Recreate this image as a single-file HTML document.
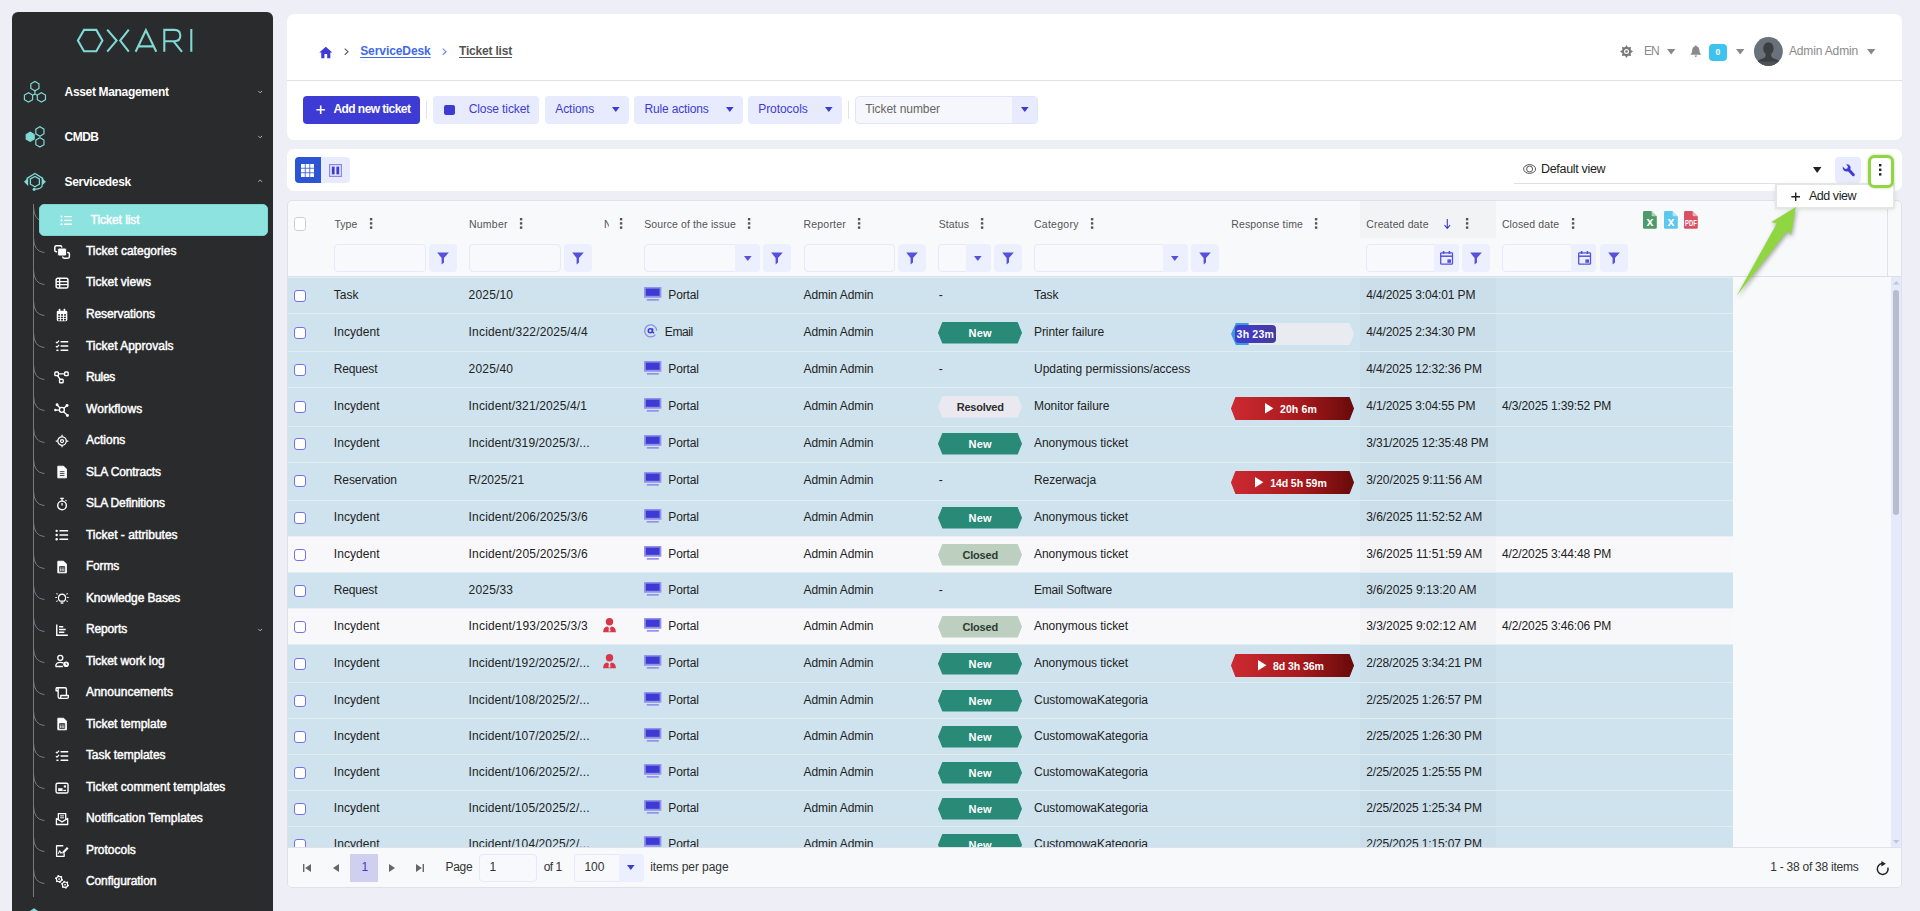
<!DOCTYPE html>
<html><head><meta charset="utf-8"><title>Ticket list</title><style>
*{box-sizing:border-box;margin:0;padding:0}
html,body{width:1920px;height:911px;overflow:hidden}
body{background:#eeeef7;font-family:"Liberation Sans",sans-serif;position:relative}
div,span,svg{position:absolute}
span{white-space:pre;line-height:16px;display:block}
svg{overflow:visible}
</style></head><body>
<div style="left:12.00px;top:12.00px;width:261.00px;height:905.00px;background:#2a2b2d;border-radius:6px 6px 0 0;"></div>
<svg style="left:0.00px;top:0.00px;" width="300.00" height="80.00" viewBox="0 0 300 80"><g fill="none" stroke="#7fd9d4" stroke-width="2.1" stroke-linejoin="miter"><path d="M77.9 40.6 L84 29.9 L96.3 29.9 L102.4 40.6 L96.3 51.3 L84 51.3 Z"/><path d="M107.2 29.6 L116.6 40.6 L107.2 51.6"/><path d="M128.8 29.6 L120.2 40.6 L128.8 51.6"/><path d="M135.6 51.8 L145.9 30.2 L156.3 51.8 M138.6 46.4 L153.4 46.4"/><path d="M164.3 51.8 L164.3 29.9 L174.5 29.9 Q180.3 29.9 180.3 35.5 Q180.3 41.2 174.5 41.2 L164.3 41.2 M173.6 41.4 L182 51.8"/><path d="M191.3 29 L191.3 51.8"/></g></svg>
<svg style="left:0.00px;top:0.00px;" width="60.00" height="120.00" viewBox="0 0 60 120"><g fill="none" stroke="#7fd9d4" stroke-width="1.2"><polygon points="38.97,88.45 34.90,90.80 30.83,88.45 30.83,83.75 34.90,81.40 38.97,83.75"/><polygon points="32.57,99.75 28.50,102.10 24.43,99.75 24.43,95.05 28.50,92.70 32.57,95.05"/><polygon points="45.47,99.75 41.40,102.10 37.33,99.75 37.33,95.05 41.40,92.70 45.47,95.05"/><path d="M34.9 90.8 L34.9 94 M34.9 94 L32.6 95.2 M34.9 94 L37.3 95.2"/></g></svg>
<svg style="left:0.00px;top:0.00px;" width="60.00" height="160.00" viewBox="0 0 60 160"><g fill="none" stroke="#7fd9d4" stroke-width="1.2"><polygon points="34.18,139.10 30.20,141.40 26.22,139.10 26.22,134.50 30.20,132.20 34.18,134.50" fill="#7fd9d4"/><polygon points="43.97,133.85 39.90,136.20 35.83,133.85 35.83,129.15 39.90,126.80 43.97,129.15"/><polygon points="43.97,144.75 39.90,147.10 35.83,144.75 35.83,140.05 39.90,137.70 43.97,140.05"/></g></svg>
<svg style="left:0.00px;top:0.00px;" width="60.00" height="200.00" viewBox="0 0 60 200"><g fill="none" stroke="#7fd9d4" stroke-width="1.3"><polygon points="39.40,184.20 34.90,186.80 30.40,184.20 30.40,179.00 34.90,176.40 39.40,179.00"/><path d="M26.6 178.6 L34.9 173.4 L43.2 178.6"/><path d="M28.2 177.6 L28.2 186 L24 181.8 Z" fill="#7fd9d4" stroke="none"/><path d="M41.6 177.6 L41.6 186 L45.9 181.8 Z" fill="#7fd9d4" stroke="none"/><path d="M42.4 185.4 Q41.5 189 35.5 189.2"/><circle cx="34.2" cy="189.3" r="1.6" fill="#7fd9d4" stroke="none"/></g></svg>
<span style="left:64.60px;top:83.64px;font-size:12px;letter-spacing:-0.335px;font-weight:700;color:#fff;">Asset Management</span>
<span style="left:64.60px;top:128.64px;font-size:12px;letter-spacing:-0.549px;font-weight:700;color:#fff;">CMDB</span>
<span style="left:64.60px;top:173.64px;font-size:12px;letter-spacing:-0.350px;font-weight:700;color:#fff;">Servicedesk</span>
<svg style="left:257.90px;top:89.80px;" width="4.40" height="4.00" viewBox="0 0 4.4 4"><path d="M0.3 0.9 L2.2 2.9 L4.1 0.9" fill="none" stroke="#aeb0b3" stroke-width="1"/></svg>
<svg style="left:257.90px;top:134.80px;" width="4.40" height="4.00" viewBox="0 0 4.4 4"><path d="M0.3 0.9 L2.2 2.9 L4.1 0.9" fill="none" stroke="#aeb0b3" stroke-width="1"/></svg>
<svg style="left:257.90px;top:179.20px;" width="4.40" height="4.00" viewBox="0 0 4.4 4"><path d="M0.3 2.9 L2.2 0.9 L4.1 2.9" fill="none" stroke="#aeb0b3" stroke-width="1"/></svg>
<div style="left:33.00px;top:204.00px;width:1.00px;height:693.00px;background:#77797c;"></div>
<svg style="left:33.00px;top:206.90px;" width="12.00" height="16.00" viewBox="0 0 12 16"><path d="M0.5 0 Q0.8 13.8 11.5 14.6" fill="none" stroke="#77797c" stroke-width="1"/></svg>
<div style="left:39.00px;top:204.00px;width:229.00px;height:32.00px;background:#8ce3e0;border:1.5px solid #7fd4d1;border-radius:5px;"></div>
<svg style="left:60.20px;top:214.30px;" width="12.80" height="12.80" viewBox="0 0 16 16"><circle cx="1.9" cy="3.2" r="1.35" fill="#fff"/><rect x="5" y="2.35" width="10" height="1.7" rx=".6" fill="#fff"/><circle cx="1.9" cy="8" r="1.35" fill="#fff"/><rect x="5" y="7.15" width="10" height="1.7" rx=".6" fill="#fff"/><circle cx="1.9" cy="12.8" r="1.35" fill="#fff"/><rect x="5" y="11.950000000000001" width="10" height="1.7" rx=".6" fill="#fff"/></svg>
<span style="left:90.60px;top:211.54px;font-size:12px;letter-spacing:-0.051px;color:#fff;-webkit-text-stroke:0.45px #fff;">Ticket list</span>
<svg style="left:33.00px;top:238.42px;" width="12.00" height="16.00" viewBox="0 0 12 16"><path d="M0.5 0 Q0.8 13.8 11.5 14.6" fill="none" stroke="#77797c" stroke-width="1"/></svg>
<svg style="left:53.70px;top:243.72px;" width="16.00" height="16.00" viewBox="0 0 16 16"><rect x="0.8" y="1.8" width="7" height="6" rx="1.6" fill="none" stroke="#fff" stroke-width="1.5"/><rect x="8.6" y="8.4" width="6.8" height="5.8" rx="1.6" fill="none" stroke="#fff" stroke-width="1.5"/><rect x="3.6" y="4" width="9" height="8" rx="1.6" fill="#fff" stroke="#2a2b2d" stroke-width="1"/></svg>
<span style="left:85.90px;top:242.96px;font-size:12px;letter-spacing:0.015px;color:#fff;-webkit-text-stroke:0.45px #fff;">Ticket categories</span>
<svg style="left:33.00px;top:269.94px;" width="12.00" height="16.00" viewBox="0 0 12 16"><path d="M0.5 0 Q0.8 13.8 11.5 14.6" fill="none" stroke="#77797c" stroke-width="1"/></svg>
<svg style="left:54.66px;top:276.20px;" width="14.08" height="14.08" viewBox="0 0 16 16"><rect x="1.3" y="2.6" width="13.4" height="11" rx="1.8" fill="none" stroke="#fff" stroke-width="1.7"/><path d="M1.5 6.4H14.5M1.5 9.9H14.5M5.3 3V13.4" stroke="#fff" stroke-width="1.5"/></svg>
<span style="left:85.90px;top:274.48px;font-size:12px;letter-spacing:0.009px;color:#fff;-webkit-text-stroke:0.45px #fff;">Ticket views</span>
<svg style="left:33.00px;top:301.46px;" width="12.00" height="16.00" viewBox="0 0 12 16"><path d="M0.5 0 Q0.8 13.8 11.5 14.6" fill="none" stroke="#77797c" stroke-width="1"/></svg>
<svg style="left:54.66px;top:307.72px;" width="14.08" height="14.08" viewBox="0 0 16 16"><rect x="2" y="3" width="12" height="12" rx="1.6" fill="#fff"/><rect x="4.4" y="0.8" width="1.7" height="3.4" rx=".6" fill="#fff"/><rect x="9.9" y="0.8" width="1.7" height="3.4" rx=".6" fill="#fff"/><rect x="3.6" y="7" width="2.2" height="1.7" fill="#2a2b2d"/><rect x="6.9" y="7" width="2.2" height="1.7" fill="#2a2b2d"/><rect x="10.2" y="7" width="2.2" height="1.7" fill="#2a2b2d"/><rect x="3.6" y="9.9" width="2.2" height="1.7" fill="#2a2b2d"/><rect x="6.9" y="9.9" width="2.2" height="1.7" fill="#2a2b2d"/><rect x="10.2" y="9.9" width="2.2" height="1.7" fill="#2a2b2d"/><rect x="3.6" y="12.5" width="2.2" height="1.7" fill="#2a2b2d"/><rect x="6.9" y="12.5" width="2.2" height="1.7" fill="#2a2b2d"/><rect x="10.2" y="12.5" width="2.2" height="1.7" fill="#2a2b2d"/></svg>
<span style="left:85.90px;top:306.00px;font-size:12px;letter-spacing:-0.086px;color:#fff;-webkit-text-stroke:0.45px #fff;">Reservations</span>
<svg style="left:33.00px;top:332.98px;" width="12.00" height="16.00" viewBox="0 0 12 16"><path d="M0.5 0 Q0.8 13.8 11.5 14.6" fill="none" stroke="#77797c" stroke-width="1"/></svg>
<svg style="left:54.66px;top:339.24px;" width="14.08" height="14.08" viewBox="0 0 16 16"><rect x="6.2" y="2.35" width="9" height="1.7" rx=".5" fill="#fff"/><rect x="6.2" y="7.15" width="9" height="1.7" rx=".5" fill="#fff"/><rect x="6.2" y="11.950000000000001" width="9" height="1.7" rx=".5" fill="#fff"/><path d="M1 3.2 L2.3 4.5 L4.7 1.8 M1 8 L2.3 9.3 L4.7 6.6" fill="none" stroke="#fff" stroke-width="1.3"/><rect x="1.6" y="12" width="2.4" height="1.7" fill="#fff"/></svg>
<span style="left:85.90px;top:337.52px;font-size:12px;letter-spacing:0.007px;color:#fff;-webkit-text-stroke:0.45px #fff;">Ticket Approvals</span>
<svg style="left:33.00px;top:364.50px;" width="12.00" height="16.00" viewBox="0 0 12 16"><path d="M0.5 0 Q0.8 13.8 11.5 14.6" fill="none" stroke="#77797c" stroke-width="1"/></svg>
<svg style="left:54.18px;top:370.28px;" width="15.04" height="15.04" viewBox="0 0 16 16"><g fill="none" stroke="#fff" stroke-width="1.5"><rect x="0.9" y="2.2" width="3.8" height="3.8" rx=".9"/><rect x="11.3" y="2.2" width="3.8" height="3.8" rx=".9"/><rect x="5.9" y="9.8" width="3.8" height="3.8" rx=".9"/><path d="M4.7 4.1H11.3M3.8 6L6.4 9.8"/></g></svg>
<span style="left:85.90px;top:369.04px;font-size:12px;letter-spacing:-0.336px;color:#fff;-webkit-text-stroke:0.45px #fff;">Rules</span>
<svg style="left:33.00px;top:396.02px;" width="12.00" height="16.00" viewBox="0 0 12 16"><path d="M0.5 0 Q0.8 13.8 11.5 14.6" fill="none" stroke="#77797c" stroke-width="1"/></svg>
<svg style="left:54.02px;top:401.64px;" width="15.36" height="15.36" viewBox="0 0 16 16"><g fill="none" stroke="#fff" stroke-width="1.4"><circle cx="8.2" cy="8.2" r="2.6"/><path d="M6.4 6.4L3.6 3.4M10.2 6.6L13 4.2M10 10.2L13.4 13.4M5.6 8.4H2"/></g><circle cx="3.2" cy="2.8" r="1.5" fill="#fff"/><circle cx="13.6" cy="3.6" r="1.5" fill="#fff"/><circle cx="14" cy="14" r="1.5" fill="#fff"/><circle cx="1.4" cy="8.4" r="1.3" fill="#fff"/></svg>
<span style="left:85.90px;top:400.56px;font-size:12px;letter-spacing:0.154px;color:#fff;-webkit-text-stroke:0.45px #fff;">Workflows</span>
<svg style="left:33.00px;top:427.54px;" width="12.00" height="16.00" viewBox="0 0 12 16"><path d="M0.5 0 Q0.8 13.8 11.5 14.6" fill="none" stroke="#77797c" stroke-width="1"/></svg>
<svg style="left:54.66px;top:433.80px;" width="14.08" height="14.08" viewBox="0 0 16 16"><g fill="none" stroke="#fff" stroke-width="1.4"><circle cx="8" cy="8" r="4.8"/><circle cx="8" cy="8" r="1.7"/><path d="M8 0.8V3.2M8 12.8V15.2M0.8 8H3.2M12.8 8H15.2"/></g></svg>
<span style="left:85.90px;top:432.08px;font-size:12px;letter-spacing:0.021px;color:#fff;-webkit-text-stroke:0.45px #fff;">Actions</span>
<svg style="left:33.00px;top:459.06px;" width="12.00" height="16.00" viewBox="0 0 12 16"><path d="M0.5 0 Q0.8 13.8 11.5 14.6" fill="none" stroke="#77797c" stroke-width="1"/></svg>
<svg style="left:54.66px;top:465.32px;" width="14.08" height="14.08" viewBox="0 0 16 16"><path d="M3.2 1.4H9.8L13 4.6V14.6H3.2Z" fill="#fff" stroke="#fff" stroke-width="1" stroke-linejoin="round"/><path d="M5.4 7.6H10.8M5.4 9.8H10.8M5.4 12H10.8" stroke="#2a2b2d" stroke-width="1"/></svg>
<span style="left:85.90px;top:463.60px;font-size:12px;letter-spacing:-0.131px;color:#fff;-webkit-text-stroke:0.45px #fff;">SLA Contracts</span>
<svg style="left:33.00px;top:490.58px;" width="12.00" height="16.00" viewBox="0 0 12 16"><path d="M0.5 0 Q0.8 13.8 11.5 14.6" fill="none" stroke="#77797c" stroke-width="1"/></svg>
<svg style="left:54.66px;top:496.84px;" width="14.08" height="14.08" viewBox="0 0 16 16"><g fill="none" stroke="#fff" stroke-width="1.6"><circle cx="8" cy="9.6" r="4.9"/><path d="M6 1.6H10M8 1.8V4.6M8 9.8V6.8M12 4.6L13 3.6" stroke-width="1.5"/></g></svg>
<span style="left:85.90px;top:495.12px;font-size:12px;letter-spacing:-0.159px;color:#fff;-webkit-text-stroke:0.45px #fff;">SLA Definitions</span>
<svg style="left:33.00px;top:522.10px;" width="12.00" height="16.00" viewBox="0 0 12 16"><path d="M0.5 0 Q0.8 13.8 11.5 14.6" fill="none" stroke="#77797c" stroke-width="1"/></svg>
<svg style="left:54.66px;top:528.36px;" width="14.08" height="14.08" viewBox="0 0 16 16"><circle cx="1.9" cy="3.2" r="1.35" fill="#fff"/><rect x="5" y="2.35" width="10" height="1.7" rx=".6" fill="#fff"/><circle cx="1.9" cy="8" r="1.35" fill="#fff"/><rect x="5" y="7.15" width="10" height="1.7" rx=".6" fill="#fff"/><circle cx="1.9" cy="12.8" r="1.35" fill="#fff"/><rect x="5" y="11.950000000000001" width="10" height="1.7" rx=".6" fill="#fff"/></svg>
<span style="left:85.90px;top:526.64px;font-size:12px;letter-spacing:0.006px;color:#fff;-webkit-text-stroke:0.45px #fff;">Ticket - attributes</span>
<svg style="left:33.00px;top:553.62px;" width="12.00" height="16.00" viewBox="0 0 12 16"><path d="M0.5 0 Q0.8 13.8 11.5 14.6" fill="none" stroke="#77797c" stroke-width="1"/></svg>
<svg style="left:54.66px;top:559.88px;" width="14.08" height="14.08" viewBox="0 0 16 16"><path d="M3.2 1.4H9.8L13 4.6V14.6H3.2Z" fill="#fff" stroke="#fff" stroke-width="1" stroke-linejoin="round"/><path d="M5.2 7.4H11V13H5.2ZM7.1 7.4V13M9.1 7.4V13M5.2 9H11" fill="none" stroke="#2a2b2d" stroke-width=".9"/></svg>
<span style="left:85.90px;top:558.16px;font-size:12px;letter-spacing:-0.139px;color:#fff;-webkit-text-stroke:0.45px #fff;">Forms</span>
<svg style="left:33.00px;top:585.14px;" width="12.00" height="16.00" viewBox="0 0 12 16"><path d="M0.5 0 Q0.8 13.8 11.5 14.6" fill="none" stroke="#77797c" stroke-width="1"/></svg>
<svg style="left:54.66px;top:591.40px;" width="14.08" height="14.08" viewBox="0 0 16 16"><g fill="none" stroke="#fff" stroke-width="1.4"><path d="M5.6 11.4Q3.6 9.6 3.9 7.2Q4.6 3.6 8 3.6Q11.4 3.6 12.1 7.2Q12.4 9.6 10.4 11.4Z"/><path d="M6.4 13.6H9.6" stroke-width="1.6"/><path d="M0.4 7.4H2.2M13.8 7.4H15.6M1.6 2.6L3 3.8M14.4 2.6L13 3.8M1.6 12L3 11M14.4 12L13 11" stroke-width="1.2"/></g></svg>
<span style="left:85.90px;top:589.68px;font-size:12px;letter-spacing:-0.117px;color:#fff;-webkit-text-stroke:0.45px #fff;">Knowledge Bases</span>
<svg style="left:33.00px;top:616.66px;" width="12.00" height="16.00" viewBox="0 0 12 16"><path d="M0.5 0 Q0.8 13.8 11.5 14.6" fill="none" stroke="#77797c" stroke-width="1"/></svg>
<svg style="left:54.66px;top:622.92px;" width="14.08" height="14.08" viewBox="0 0 16 16"><path d="M2 1.6V14H14.6" fill="none" stroke="#fff" stroke-width="1.6"/><path d="M4.6 4.4H9.4M4.6 7.4H12.2M4.6 10.4H10.6" stroke="#fff" stroke-width="1.7"/></svg>
<span style="left:85.90px;top:621.20px;font-size:12px;letter-spacing:-0.116px;color:#fff;-webkit-text-stroke:0.45px #fff;">Reports</span>
<svg style="left:257.90px;top:628.06px;" width="4.40" height="4.00" viewBox="0 0 4.4 4"><path d="M0.3 0.9 L2.2 2.9 L4.1 0.9" fill="none" stroke="#aeb0b3" stroke-width="1"/></svg>
<svg style="left:33.00px;top:648.18px;" width="12.00" height="16.00" viewBox="0 0 12 16"><path d="M0.5 0 Q0.8 13.8 11.5 14.6" fill="none" stroke="#77797c" stroke-width="1"/></svg>
<svg style="left:54.66px;top:654.44px;" width="14.08" height="14.08" viewBox="0 0 16 16"><g fill="none" stroke="#fff" stroke-width="1.5"><circle cx="6" cy="4.4" r="2.9"/><path d="M0.8 14.2Q0.8 9.6 6 9.6Q8.4 9.6 9.6 10.6M0.8 14.2H9"/></g><circle cx="12.6" cy="11.6" r="3.2" fill="#fff"/><path d="M12.6 9.8V11.8H14" fill="none" stroke="#2a2b2d" stroke-width=".9"/></svg>
<span style="left:85.90px;top:652.72px;font-size:12px;letter-spacing:-0.052px;color:#fff;-webkit-text-stroke:0.45px #fff;">Ticket work log</span>
<svg style="left:33.00px;top:679.70px;" width="12.00" height="16.00" viewBox="0 0 12 16"><path d="M0.5 0 Q0.8 13.8 11.5 14.6" fill="none" stroke="#77797c" stroke-width="1"/></svg>
<svg style="left:54.66px;top:685.96px;" width="14.08" height="14.08" viewBox="0 0 16 16"><g fill="none" stroke="#fff" stroke-width="1.5" stroke-linejoin="round"><path d="M3.6 5.4V3.6Q3.6 2 2.2 2H11.4Q13 2 13 3.6V10.6"/><path d="M3.6 5.4H1.2V3.4Q1.2 2 2.4 2"/><path d="M3.6 5V12.2Q3.6 14 5.4 14H13.6Q15.2 14 15.2 12.4V10.8H6.6V12.4Q6.6 14 5.2 14"/></g></svg>
<span style="left:85.90px;top:684.24px;font-size:12px;letter-spacing:0.022px;color:#fff;-webkit-text-stroke:0.45px #fff;">Announcements</span>
<svg style="left:33.00px;top:711.22px;" width="12.00" height="16.00" viewBox="0 0 12 16"><path d="M0.5 0 Q0.8 13.8 11.5 14.6" fill="none" stroke="#77797c" stroke-width="1"/></svg>
<svg style="left:54.66px;top:717.48px;" width="14.08" height="14.08" viewBox="0 0 16 16"><path d="M3.2 1.4H9.8L13 4.6V14.6H3.2Z" fill="#fff" stroke="#fff" stroke-width="1" stroke-linejoin="round"/><path d="M5.2 7.4H11V13H5.2ZM7.1 7.4V13M9.1 7.4V13M5.2 9H11" fill="none" stroke="#2a2b2d" stroke-width=".9"/></svg>
<span style="left:85.90px;top:715.76px;font-size:12px;letter-spacing:-0.008px;color:#fff;-webkit-text-stroke:0.45px #fff;">Ticket template</span>
<svg style="left:33.00px;top:742.74px;" width="12.00" height="16.00" viewBox="0 0 12 16"><path d="M0.5 0 Q0.8 13.8 11.5 14.6" fill="none" stroke="#77797c" stroke-width="1"/></svg>
<svg style="left:54.66px;top:749.00px;" width="14.08" height="14.08" viewBox="0 0 16 16"><rect x="6.2" y="2.35" width="9" height="1.7" rx=".5" fill="#fff"/><rect x="6.2" y="7.15" width="9" height="1.7" rx=".5" fill="#fff"/><rect x="6.2" y="11.950000000000001" width="9" height="1.7" rx=".5" fill="#fff"/><path d="M1 3.2 L2.3 4.5 L4.7 1.8 M1 8 L2.3 9.3 L4.7 6.6" fill="none" stroke="#fff" stroke-width="1.3"/><rect x="1.6" y="12" width="2.4" height="1.7" fill="#fff"/></svg>
<span style="left:85.90px;top:747.28px;font-size:12px;letter-spacing:-0.031px;color:#fff;-webkit-text-stroke:0.45px #fff;">Task templates</span>
<svg style="left:33.00px;top:774.26px;" width="12.00" height="16.00" viewBox="0 0 12 16"><path d="M0.5 0 Q0.8 13.8 11.5 14.6" fill="none" stroke="#77797c" stroke-width="1"/></svg>
<svg style="left:54.66px;top:780.52px;" width="14.08" height="14.08" viewBox="0 0 16 16"><rect x="1.2" y="2.6" width="13.6" height="11" rx="1.8" fill="none" stroke="#fff" stroke-width="1.6"/><rect x="3.6" y="8.2" width="5" height="3.2" fill="#fff"/><rect x="10" y="5" width="2.6" height="2.4" fill="#fff"/><rect x="9.4" y="10" width="3.2" height="1.4" fill="#fff"/></svg>
<span style="left:85.90px;top:778.80px;font-size:12px;letter-spacing:-0.008px;color:#fff;-webkit-text-stroke:0.45px #fff;">Ticket comment templates</span>
<svg style="left:33.00px;top:805.78px;" width="12.00" height="16.00" viewBox="0 0 12 16"><path d="M0.5 0 Q0.8 13.8 11.5 14.6" fill="none" stroke="#77797c" stroke-width="1"/></svg>
<svg style="left:54.66px;top:812.04px;" width="14.08" height="14.08" viewBox="0 0 16 16"><g fill="none" stroke="#fff" stroke-width="1.5" stroke-linejoin="round"><path d="M1.6 7.4V14.2H14.4V7.4L8 11.2Z"/><path d="M3.8 8.4V1.8H12.2V8.4"/><path d="M5.8 4.4H10.2M5.8 6.6H10.2" stroke-width="1.1"/></g></svg>
<span style="left:85.90px;top:810.32px;font-size:12px;letter-spacing:-0.012px;color:#fff;-webkit-text-stroke:0.45px #fff;">Notification Templates</span>
<svg style="left:33.00px;top:837.30px;" width="12.00" height="16.00" viewBox="0 0 12 16"><path d="M0.5 0 Q0.8 13.8 11.5 14.6" fill="none" stroke="#77797c" stroke-width="1"/></svg>
<svg style="left:54.66px;top:843.56px;" width="14.08" height="14.08" viewBox="0 0 16 16"><g fill="none" stroke="#fff" stroke-width="1.5" stroke-linejoin="round"><path d="M9.4 2H1.8V14H10.4V10.6"/><path d="M3.6 11.2L5.4 7.6L6.8 10.4L8 9.2" stroke-width="1.2"/></g><path d="M8.2 11L8.8 8.4L13.6 3.4L15.4 5.2L10.6 10.2Z" fill="#fff"/></svg>
<span style="left:85.90px;top:841.84px;font-size:12px;letter-spacing:-0.013px;color:#fff;-webkit-text-stroke:0.45px #fff;">Protocols</span>
<svg style="left:33.00px;top:868.82px;" width="12.00" height="16.00" viewBox="0 0 12 16"><path d="M0.5 0 Q0.8 13.8 11.5 14.6" fill="none" stroke="#77797c" stroke-width="1"/></svg>
<svg style="left:54.66px;top:875.08px;" width="14.08" height="14.08" viewBox="0 0 16 16"><circle cx="4.6" cy="4.6" r="3" fill="none" stroke="#fff" stroke-width="1.3"/><circle cx="4.6" cy="4.6" r="0.96" fill="#fff"/><circle cx="8.17" cy="5.56" r="0.95" fill="#fff"/><circle cx="5.56" cy="8.17" r="0.95" fill="#fff"/><circle cx="1.98" cy="7.22" r="0.95" fill="#fff"/><circle cx="1.03" cy="3.64" r="0.95" fill="#fff"/><circle cx="3.64" cy="1.03" r="0.95" fill="#fff"/><circle cx="7.22" cy="1.98" r="0.95" fill="#fff"/><circle cx="11.4" cy="11" r="3" fill="none" stroke="#fff" stroke-width="1.3"/><circle cx="11.4" cy="11" r="0.96" fill="#fff"/><circle cx="14.97" cy="11.96" r="0.95" fill="#fff"/><circle cx="12.36" cy="14.57" r="0.95" fill="#fff"/><circle cx="8.78" cy="13.62" r="0.95" fill="#fff"/><circle cx="7.83" cy="10.04" r="0.95" fill="#fff"/><circle cx="10.44" cy="7.43" r="0.95" fill="#fff"/><circle cx="14.02" cy="8.38" r="0.95" fill="#fff"/></svg>
<span style="left:85.90px;top:873.36px;font-size:12px;letter-spacing:-0.067px;color:#fff;-webkit-text-stroke:0.45px #fff;">Configuration</span>
<svg style="left:28.00px;top:907.00px;" width="12.00" height="6.00" viewBox="0 0 12 6"><polygon points="6,1.2 9.5,3.4 9.5,8 2.5,8 2.5,3.4" fill="#7fd9d4"/></svg>
<div style="left:287.00px;top:14.00px;width:1615.00px;height:126.00px;background:#fff;border-radius:7px;"></div>
<div style="left:287.00px;top:80.00px;width:1615.00px;height:1.00px;background:#dfe3e8;"></div>
<svg style="left:318.60px;top:45.60px;" width="13.60" height="12.60" viewBox="0 0 24 22"><path d="M12 1 L0.5 11.2 H4 V21.5 H9.6 V14.2 H14.4 V21.5 H20 V11.2 H23.5 Z" fill="#3d3bd3"/></svg>
<svg style="left:344.00px;top:47.60px;" width="5.00" height="7.40" viewBox="0 0 5 7.4"><path d="M0.7 0.6 L4 3.7 L0.7 6.8" fill="none" stroke="#555" stroke-width="1.1"/></svg>
<span style="left:360.20px;top:42.74px;font-size:12px;letter-spacing:-0.081px;font-weight:700;color:#4169e8;text-decoration:underline;text-underline-offset:1.5px;">ServiceDesk</span>
<svg style="left:442.20px;top:47.60px;" width="5.00" height="7.40" viewBox="0 0 5 7.4"><path d="M0.7 0.6 L4 3.7 L0.7 6.8" fill="none" stroke="#6b7fe6" stroke-width="1.1"/></svg>
<span style="left:459.00px;top:42.74px;font-size:12px;letter-spacing:-0.194px;font-weight:700;color:#555;text-decoration:underline;text-underline-offset:1.5px;">Ticket list</span>
<svg style="left:1619.60px;top:45.20px;" width="13.00" height="13.00" viewBox="-6.5 -6.5 13 13"><g fill="#777"><path d="M-1.9 -3.6 L0 -6.5 L1.9 -3.6 Z" transform="rotate(0)"/><path d="M-1.9 -3.6 L0 -6.5 L1.9 -3.6 Z" transform="rotate(45)"/><path d="M-1.9 -3.6 L0 -6.5 L1.9 -3.6 Z" transform="rotate(90)"/><path d="M-1.9 -3.6 L0 -6.5 L1.9 -3.6 Z" transform="rotate(135)"/><path d="M-1.9 -3.6 L0 -6.5 L1.9 -3.6 Z" transform="rotate(180)"/><path d="M-1.9 -3.6 L0 -6.5 L1.9 -3.6 Z" transform="rotate(225)"/><path d="M-1.9 -3.6 L0 -6.5 L1.9 -3.6 Z" transform="rotate(270)"/><path d="M-1.9 -3.6 L0 -6.5 L1.9 -3.6 Z" transform="rotate(315)"/></g><circle r="4.2" fill="#777"/><circle r="2.5" fill="#fff"/><circle r="1.3" fill="#777"/></svg>
<span style="left:1644.00px;top:43.14px;font-size:12px;letter-spacing:-1.035px;color:#8a8a8a;">EN</span>
<svg style="left:1667.00px;top:49.00px;" width="8.40" height="5.60" viewBox="0 0 8.4 5.6"><path d="M0 0 H8.4 L4.2 5.6 Z" fill="#888"/></svg>
<svg style="left:1690.00px;top:45.40px;" width="11.60" height="12.40" viewBox="0 0 14 15"><path d="M7 0.3 Q7.9 0.3 7.9 1.4 Q11.4 2.4 11.4 6.6 Q11.4 9.6 13.2 11 V11.8 H0.8 V11 Q2.6 9.6 2.6 6.6 Q2.6 2.4 6.1 1.4 Q6.1 0.3 7 0.3 Z M5.4 12.8 H8.6 Q8.4 14.6 7 14.6 Q5.6 14.6 5.4 12.8 Z" fill="#8a8a8a"/></svg>
<div style="left:1709.00px;top:43.60px;width:18.00px;height:17.60px;background:#3ec3ee;border-radius:4px;"></div>
<span style="left:1715.60px;top:44.40px;font-size:8.5px;font-weight:700;color:#fff;">0</span>
<svg style="left:1735.80px;top:49.00px;" width="8.40" height="5.60" viewBox="0 0 8.4 5.6"><path d="M0 0 H8.4 L4.2 5.6 Z" fill="#888"/></svg>
<svg style="left:1753.60px;top:36.60px;" width="28.80" height="28.80" viewBox="0 0 28.8 28.8"><defs><clipPath id="avc"><circle cx="14.4" cy="14.4" r="14.4"/></clipPath></defs><circle cx="14.4" cy="14.4" r="14.4" fill="#69717a"/><g clip-path="url(#avc)" fill="#3c3f42"><ellipse cx="14.4" cy="11.6" rx="5.2" ry="6.4"/><path d="M11.6 16 H17.2 V19 Q17.4 20.6 20 21.4 Q24.8 22.8 25.4 25 V30 H3.4 V25 Q4 22.8 8.8 21.4 Q11.4 20.6 11.6 19 Z"/><rect x="0" y="24.6" width="29" height="5" fill="#4d5359"/></g></svg>
<span style="left:1789.00px;top:43.14px;font-size:12px;letter-spacing:-0.154px;color:#8a8a8a;">Admin Admin</span>
<svg style="left:1867.00px;top:49.00px;" width="8.40" height="5.60" viewBox="0 0 8.4 5.6"><path d="M0 0 H8.4 L4.2 5.6 Z" fill="#888"/></svg>
<div style="left:303.00px;top:96.00px;width:117.00px;height:28.00px;background:#3d3bd3;border-radius:4px;"></div>
<svg style="left:315.60px;top:105.40px;" width="9.40" height="9.40" viewBox="0 0 10 10"><path d="M5 0.4V9.6M0.4 5H9.6" stroke="#fff" stroke-width="1.7"/></svg>
<span style="left:333.40px;top:101.34px;font-size:12px;letter-spacing:-0.548px;font-weight:700;color:#fff;">Add new ticket</span>
<div style="left:426.00px;top:101.00px;width:1.00px;height:18.00px;background:#e2e3ea;"></div>
<div style="left:433.00px;top:96.00px;width:106.00px;height:28.00px;background:#e8ebfd;border-radius:4px;"></div>
<div style="left:444.00px;top:104.60px;width:10.60px;height:10.60px;background:#3d3bd3;border-radius:2px;"></div>
<span style="left:468.70px;top:101.34px;font-size:12px;letter-spacing:-0.102px;color:#3d3bd3;">Close ticket</span>
<div style="left:545.00px;top:96.00px;width:84.00px;height:28.00px;background:#e8ebfd;border-radius:4px;"></div>
<span style="left:555.20px;top:101.34px;font-size:12px;letter-spacing:-0.050px;color:#3d3bd3;">Actions</span>
<svg style="left:612.40px;top:107.40px;" width="7.60" height="5.00" viewBox="0 0 7.6 5"><path d="M0 0 H7.6 L3.8 5 Z" fill="#3d3bd3"/></svg>
<div style="left:634.00px;top:96.00px;width:109.00px;height:28.00px;background:#e8ebfd;border-radius:4px;"></div>
<span style="left:644.50px;top:101.34px;font-size:12px;letter-spacing:-0.169px;color:#3d3bd3;">Rule actions</span>
<svg style="left:726.40px;top:107.40px;" width="7.60" height="5.00" viewBox="0 0 7.6 5"><path d="M0 0 H7.6 L3.8 5 Z" fill="#3d3bd3"/></svg>
<div style="left:748.00px;top:96.00px;width:94.00px;height:28.00px;background:#e8ebfd;border-radius:4px;"></div>
<span style="left:758.20px;top:101.34px;font-size:12px;letter-spacing:-0.058px;color:#3d3bd3;">Protocols</span>
<svg style="left:825.40px;top:107.40px;" width="7.60" height="5.00" viewBox="0 0 7.6 5"><path d="M0 0 H7.6 L3.8 5 Z" fill="#3d3bd3"/></svg>
<div style="left:848.00px;top:101.00px;width:1.00px;height:18.00px;background:#e2e3ea;"></div>
<div style="left:855.00px;top:96.00px;width:183.00px;height:28.00px;background:#f6f7fc;border:1px solid #e1e4fb;border-radius:4px;"></div>
<div style="left:1012.00px;top:97.00px;width:25.00px;height:26.00px;background:#e8ebfd;border-radius:0 3px 3px 0;"></div>
<span style="left:865.20px;top:101.34px;font-size:12px;letter-spacing:-0.060px;color:#666;">Ticket number</span>
<svg style="left:1021.20px;top:107.40px;" width="7.60" height="5.00" viewBox="0 0 7.6 5"><path d="M0 0 H7.6 L3.8 5 Z" fill="#3d3bd3"/></svg>
<div style="left:287.00px;top:149.00px;width:1615.00px;height:42.00px;background:#fff;border-radius:7px;"></div>
<div style="left:295.00px;top:157.00px;width:26.00px;height:26.00px;background:#2c55d4;border-radius:4px 0 0 4px;"></div>
<div style="left:321.00px;top:157.00px;width:29.00px;height:26.00px;background:#e8ebfd;border-radius:0 4px 4px 0;"></div>
<svg style="left:301.00px;top:164.00px;" width="13.00" height="13.00" viewBox="0 0 13 13"><rect x="0.0" y="0.0" width="3.8" height="3.8" fill="#fff"/><rect x="4.6" y="0.0" width="3.8" height="3.8" fill="#fff"/><rect x="9.2" y="0.0" width="3.8" height="3.8" fill="#fff"/><rect x="0.0" y="4.6" width="3.8" height="3.8" fill="#fff"/><rect x="4.6" y="4.6" width="3.8" height="3.8" fill="#fff"/><rect x="9.2" y="4.6" width="3.8" height="3.8" fill="#fff"/><rect x="0.0" y="9.2" width="3.8" height="3.8" fill="#fff"/><rect x="4.6" y="9.2" width="3.8" height="3.8" fill="#fff"/><rect x="9.2" y="9.2" width="3.8" height="3.8" fill="#fff"/></svg>
<svg style="left:329.00px;top:163.80px;" width="13.00" height="13.00" viewBox="0 0 13 13"><rect x="0.6" y="0.6" width="11.8" height="11.8" fill="none" stroke="#8b89e4" stroke-width="1.2"/><rect x="2.8" y="2.6" width="2.8" height="7.8" fill="#3d3bd3"/><rect x="7.4" y="2.6" width="2.8" height="7.8" fill="#3d3bd3"/></svg>
<div style="left:1514.00px;top:183.00px;width:314.00px;height:1.00px;background:#dcdfe6;"></div>
<svg style="left:1523.00px;top:164.00px;" width="13.20" height="10.00" viewBox="0 0 13.2 10"><ellipse cx="6.6" cy="5" rx="6" ry="4.4" fill="none" stroke="#444" stroke-width=".9"/><circle cx="6.6" cy="5" r="3" fill="none" stroke="#444" stroke-width=".9"/></svg>
<span style="left:1541.00px;top:160.94px;font-size:12.5px;letter-spacing:-0.315px;color:#222;">Default view</span>
<svg style="left:1813.00px;top:167.00px;" width="8.40" height="6.00" viewBox="0 0 8.4 6"><path d="M0 0 H8.4 L4.2 6 Z" fill="#222"/></svg>
<div style="left:1835.00px;top:157.00px;width:26.00px;height:26.00px;background:#e8ebfd;border-radius:4px;"></div>
<svg style="left:1841.60px;top:163.80px;" width="13.00" height="13.00" viewBox="0 0 13 13"><g fill="#3d3bd3"><path d="M4.2 0.3 Q7.2 -0.2 8.4 2.6 Q8.9 4 8.3 5.2 L12.6 10 Q13.2 11 12.3 11.9 Q11.4 12.6 10.5 11.9 L6 7.2 Q4 7.9 2.2 6.8 Q0.2 5.2 0.8 2.6 L3.2 5 L5.4 4.4 L5.9 2.4 Z"/></g></svg>
<div style="left:287.00px;top:200.00px;width:1615.00px;height:688.00px;background:#f8f9fb;border:1px solid #dfe1e8;border-radius:5px;"></div>
<div style="left:1360.00px;top:201.00px;width:136.00px;height:37.00px;background:#f2f3f5;"></div>
<div style="left:1887.00px;top:201.00px;width:1.00px;height:76.00px;background:#dfe1e8;"></div>
<div style="left:294.00px;top:217.40px;width:12.00px;height:13.20px;background:#fff;border:1px solid #cfcfd4;border-radius:3px;"></div>
<span style="left:334.40px;top:216.42px;font-size:10.5px;letter-spacing:0.034px;color:#555;">Type</span>
<svg style="left:368.70px;top:218.30px;" width="4.00" height="12.00" viewBox="0 0 4 12"><g fill="#555"><rect x=".9" y="0" width="2.4" height="2.4"/><rect x=".9" y="4.2" width="2.4" height="2.4"/><rect x=".9" y="8.4" width="2.4" height="2.4"/></g></svg>
<span style="left:468.90px;top:216.42px;font-size:10.5px;letter-spacing:0.260px;color:#555;">Number</span>
<svg style="left:518.60px;top:218.30px;" width="4.00" height="12.00" viewBox="0 0 4 12"><g fill="#555"><rect x=".9" y="0" width="2.4" height="2.4"/><rect x=".9" y="4.2" width="2.4" height="2.4"/><rect x=".9" y="8.4" width="2.4" height="2.4"/></g></svg>
<span style="left:644.20px;top:216.42px;font-size:10.5px;letter-spacing:0.096px;color:#555;">Source of the issue</span>
<svg style="left:746.80px;top:218.30px;" width="4.00" height="12.00" viewBox="0 0 4 12"><g fill="#555"><rect x=".9" y="0" width="2.4" height="2.4"/><rect x=".9" y="4.2" width="2.4" height="2.4"/><rect x=".9" y="8.4" width="2.4" height="2.4"/></g></svg>
<span style="left:803.50px;top:216.42px;font-size:10.5px;letter-spacing:0.194px;color:#555;">Reporter</span>
<svg style="left:856.60px;top:218.30px;" width="4.00" height="12.00" viewBox="0 0 4 12"><g fill="#555"><rect x=".9" y="0" width="2.4" height="2.4"/><rect x=".9" y="4.2" width="2.4" height="2.4"/><rect x=".9" y="8.4" width="2.4" height="2.4"/></g></svg>
<span style="left:938.70px;top:216.42px;font-size:10.5px;letter-spacing:0.106px;color:#555;">Status</span>
<svg style="left:979.80px;top:218.30px;" width="4.00" height="12.00" viewBox="0 0 4 12"><g fill="#555"><rect x=".9" y="0" width="2.4" height="2.4"/><rect x=".9" y="4.2" width="2.4" height="2.4"/><rect x=".9" y="8.4" width="2.4" height="2.4"/></g></svg>
<span style="left:1033.90px;top:216.42px;font-size:10.5px;letter-spacing:0.287px;color:#555;">Category</span>
<svg style="left:1089.80px;top:218.30px;" width="4.00" height="12.00" viewBox="0 0 4 12"><g fill="#555"><rect x=".9" y="0" width="2.4" height="2.4"/><rect x=".9" y="4.2" width="2.4" height="2.4"/><rect x=".9" y="8.4" width="2.4" height="2.4"/></g></svg>
<span style="left:1231.20px;top:216.42px;font-size:10.5px;letter-spacing:0.136px;color:#555;">Response time</span>
<svg style="left:1313.60px;top:218.30px;" width="4.00" height="12.00" viewBox="0 0 4 12"><g fill="#555"><rect x=".9" y="0" width="2.4" height="2.4"/><rect x=".9" y="4.2" width="2.4" height="2.4"/><rect x=".9" y="8.4" width="2.4" height="2.4"/></g></svg>
<span style="left:1366.30px;top:216.42px;font-size:10.5px;letter-spacing:0.133px;color:#555;">Created date</span>
<svg style="left:1464.80px;top:218.30px;" width="4.00" height="12.00" viewBox="0 0 4 12"><g fill="#555"><rect x=".9" y="0" width="2.4" height="2.4"/><rect x=".9" y="4.2" width="2.4" height="2.4"/><rect x=".9" y="8.4" width="2.4" height="2.4"/></g></svg>
<span style="left:1501.90px;top:216.42px;font-size:10.5px;letter-spacing:0.115px;color:#555;">Closed date</span>
<svg style="left:1571.00px;top:218.30px;" width="4.00" height="12.00" viewBox="0 0 4 12"><g fill="#555"><rect x=".9" y="0" width="2.4" height="2.4"/><rect x=".9" y="4.2" width="2.4" height="2.4"/><rect x=".9" y="8.4" width="2.4" height="2.4"/></g></svg>
<div style="left:604.00px;top:216.00px;width:5.20px;height:16.00px;overflow:hidden;"><span style="left:0.00px;top:0.42px;font-size:10.5px;color:#555;">N</span></div>
<svg style="left:618.70px;top:218.30px;" width="4.00" height="12.00" viewBox="0 0 4 12"><g fill="#555"><rect x=".9" y="0" width="2.4" height="2.4"/><rect x=".9" y="4.2" width="2.4" height="2.4"/><rect x=".9" y="8.4" width="2.4" height="2.4"/></g></svg>
<svg style="left:1443.60px;top:218.60px;" width="6.60" height="10.40" viewBox="0 0 6.6 10.4"><path d="M3.3 0V9.2M0.5 6.2L3.3 9.4L6.1 6.2" fill="none" stroke="#3d3bd3" stroke-width="1.1"/></svg>
<div style="left:334.00px;top:244.20px;width:92.00px;height:27.60px;background:#f8f9fc;border:1px solid #e6e8fc;border-radius:4px;"></div>
<div style="left:429.20px;top:244.20px;width:28.00px;height:27.60px;background:#eceffe;border-radius:4px;"></div>
<svg style="left:437.20px;top:252.40px;" width="12.00" height="12.60" viewBox="0 0 12 12.6"><path d="M0.2 0.6 H11.8 L7 6 V10.4 L4.6 12.4 V6 Z" fill="#5552d9"/></svg>
<div style="left:469.00px;top:244.20px;width:92.00px;height:27.60px;background:#f8f9fc;border:1px solid #e6e8fc;border-radius:4px;"></div>
<div style="left:564.20px;top:244.20px;width:28.00px;height:27.60px;background:#eceffe;border-radius:4px;"></div>
<svg style="left:572.20px;top:252.40px;" width="12.00" height="12.60" viewBox="0 0 12 12.6"><path d="M0.2 0.6 H11.8 L7 6 V10.4 L4.6 12.4 V6 Z" fill="#5552d9"/></svg>
<div style="left:644.20px;top:244.20px;width:115.60px;height:27.60px;background:#f8f9fc;border:1px solid #e6e8fc;border-radius:4px;"></div>
<div style="left:735.00px;top:244.20px;width:24.80px;height:27.60px;background:#eceffe;border-radius:0 4px 4px 0;"></div>
<svg style="left:744.40px;top:255.80px;" width="7.60" height="5.00" viewBox="0 0 7.6 5"><path d="M0 0 H7.6 L3.8 5 Z" fill="#5552d9"/></svg>
<div style="left:763.40px;top:244.20px;width:28.00px;height:27.60px;background:#eceffe;border-radius:4px;"></div>
<svg style="left:771.40px;top:252.40px;" width="12.00" height="12.60" viewBox="0 0 12 12.6"><path d="M0.2 0.6 H11.8 L7 6 V10.4 L4.6 12.4 V6 Z" fill="#5552d9"/></svg>
<div style="left:803.50px;top:244.20px;width:91.40px;height:27.60px;background:#f8f9fc;border:1px solid #e6e8fc;border-radius:4px;"></div>
<div style="left:898.40px;top:244.20px;width:28.00px;height:27.60px;background:#eceffe;border-radius:4px;"></div>
<svg style="left:906.40px;top:252.40px;" width="12.00" height="12.60" viewBox="0 0 12 12.6"><path d="M0.2 0.6 H11.8 L7 6 V10.4 L4.6 12.4 V6 Z" fill="#5552d9"/></svg>
<div style="left:938.20px;top:244.20px;width:52.80px;height:27.60px;background:#f8f9fc;border:1px solid #e6e8fc;border-radius:4px;"></div>
<div style="left:966.00px;top:244.20px;width:25.00px;height:27.60px;background:#eceffe;border-radius:0 4px 4px 0;"></div>
<svg style="left:974.40px;top:255.80px;" width="7.60" height="5.00" viewBox="0 0 7.6 5"><path d="M0 0 H7.6 L3.8 5 Z" fill="#5552d9"/></svg>
<div style="left:994.00px;top:244.20px;width:28.00px;height:27.60px;background:#eceffe;border-radius:4px;"></div>
<svg style="left:1002.00px;top:252.40px;" width="12.00" height="12.60" viewBox="0 0 12 12.6"><path d="M0.2 0.6 H11.8 L7 6 V10.4 L4.6 12.4 V6 Z" fill="#5552d9"/></svg>
<div style="left:1033.90px;top:244.20px;width:153.80px;height:27.60px;background:#f8f9fc;border:1px solid #e6e8fc;border-radius:4px;"></div>
<div style="left:1163.00px;top:244.20px;width:24.70px;height:27.60px;background:#eceffe;border-radius:0 4px 4px 0;"></div>
<svg style="left:1171.40px;top:255.80px;" width="7.60" height="5.00" viewBox="0 0 7.6 5"><path d="M0 0 H7.6 L3.8 5 Z" fill="#5552d9"/></svg>
<div style="left:1191.00px;top:244.20px;width:28.00px;height:27.60px;background:#eceffe;border-radius:4px;"></div>
<svg style="left:1199.00px;top:252.40px;" width="12.00" height="12.60" viewBox="0 0 12 12.6"><path d="M0.2 0.6 H11.8 L7 6 V10.4 L4.6 12.4 V6 Z" fill="#5552d9"/></svg>
<div style="left:1366.30px;top:244.20px;width:93.00px;height:27.60px;background:#f8f9fc;border:1px solid #e6e8fc;border-radius:4px;"></div>
<div style="left:1434.00px;top:244.20px;width:25.30px;height:27.60px;background:#eceffe;border-radius:0 4px 4px 0;"></div>
<svg style="left:1439.80px;top:250.80px;" width="13.20" height="14.00" viewBox="0 0 13.2 14"><g fill="none" stroke="#5552d9" stroke-width="1.3"><rect x=".7" y="1.8" width="11.8" height="11.4" rx=".8"/><path d="M.7 5.2H12.5" stroke-width="1.5"/><path d="M3.6 0V3M9.4 0V3" stroke-width="1.6"/></g><rect x="7.4" y="8.4" width="3.6" height="3.4" fill="#5552d9"/></svg>
<div style="left:1462.00px;top:244.20px;width:28.00px;height:27.60px;background:#eceffe;border-radius:4px;"></div>
<svg style="left:1470.00px;top:252.40px;" width="12.00" height="12.60" viewBox="0 0 12 12.6"><path d="M0.2 0.6 H11.8 L7 6 V10.4 L4.6 12.4 V6 Z" fill="#5552d9"/></svg>
<div style="left:1501.90px;top:244.20px;width:94.20px;height:27.60px;background:#f8f9fc;border:1px solid #e6e8fc;border-radius:4px;"></div>
<div style="left:1571.00px;top:244.20px;width:25.10px;height:27.60px;background:#eceffe;border-radius:0 4px 4px 0;"></div>
<svg style="left:1577.80px;top:250.80px;" width="13.20" height="14.00" viewBox="0 0 13.2 14"><g fill="none" stroke="#5552d9" stroke-width="1.3"><rect x=".7" y="1.8" width="11.8" height="11.4" rx=".8"/><path d="M.7 5.2H12.5" stroke-width="1.5"/><path d="M3.6 0V3M9.4 0V3" stroke-width="1.6"/></g><rect x="7.4" y="8.4" width="3.6" height="3.4" fill="#5552d9"/></svg>
<div style="left:1599.60px;top:244.20px;width:28.00px;height:27.60px;background:#eceffe;border-radius:4px;"></div>
<svg style="left:1607.60px;top:252.40px;" width="12.00" height="12.60" viewBox="0 0 12 12.6"><path d="M0.2 0.6 H11.8 L7 6 V10.4 L4.6 12.4 V6 Z" fill="#5552d9"/></svg>
<svg style="left:1643.00px;top:211.40px;" width="13.80" height="17.80" viewBox="0 0 13.8 17.8"><path d="M1.4 0 H8.6 L13.8 5.2 V16.4 Q13.8 17.8 12.4 17.8 H1.4 Q0 17.8 0 16.4 V1.4 Q0 0 1.4 0 Z" fill="#4e9a6b"/><path d="M8.6 0 L13.8 5.2 H9.6 Q8.6 5.2 8.6 4.2 Z" fill="#fff" opacity=".55"/><text x="3.4" y="15.2" font-family="Liberation Sans,sans-serif" font-weight="700" font-size="12.5" fill="#fff" >x</text></svg>
<svg style="left:1663.80px;top:211.40px;" width="13.80" height="17.80" viewBox="0 0 13.8 17.8"><path d="M1.4 0 H8.6 L13.8 5.2 V16.4 Q13.8 17.8 12.4 17.8 H1.4 Q0 17.8 0 16.4 V1.4 Q0 0 1.4 0 Z" fill="#5bc8ec"/><path d="M8.6 0 L13.8 5.2 H9.6 Q8.6 5.2 8.6 4.2 Z" fill="#fff" opacity=".55"/><text x="3.4" y="15.2" font-family="Liberation Sans,sans-serif" font-weight="700" font-size="12.5" fill="#fff" >x</text></svg>
<svg style="left:1684.20px;top:211.40px;" width="13.80" height="17.80" viewBox="0 0 13.8 17.8"><path d="M1.4 0 H8.6 L13.8 5.2 V16.4 Q13.8 17.8 12.4 17.8 H1.4 Q0 17.8 0 16.4 V1.4 Q0 0 1.4 0 Z" fill="#db4f62"/><path d="M8.6 0 L13.8 5.2 H9.6 Q8.6 5.2 8.6 4.2 Z" fill="#fff" opacity=".55"/><text x="1.1" y="15.2" font-family="Liberation Sans,sans-serif" font-weight="700" font-size="8.2" fill="#fff" textLength="11.6" lengthAdjust="spacingAndGlyphs">PDF</text></svg>
<div style="left:288.00px;top:276.40px;width:1613.00px;height:1.00px;background:#dcdfe4;"></div>
<div style="left:288.00px;top:277.00px;width:1445.00px;height:36.00px;background:#cfe3ee;border-top:1px solid #e1ecf3;"></div>
<div style="left:1360.00px;top:277.00px;width:136.00px;height:36.00px;background:#cbdfeb;border-top:1px solid #e1ecf3;"></div>
<div style="left:294.00px;top:289.85px;width:12.00px;height:11.80px;background:#fff;border:1px solid #7472e6;border-radius:3px;"></div>
<span style="left:333.80px;top:286.79px;font-size:12px;letter-spacing:0.032px;color:#222;">Task</span>
<span style="left:468.60px;top:286.79px;font-size:12px;letter-spacing:0.175px;color:#222;">2025/10</span>
<svg style="left:644.00px;top:286.95px;" width="17.40" height="14.00" viewBox="0 0 17.4 14"><rect x="0" y="0" width="17.4" height="10.8" rx=".6" fill="#9391ea"/><rect x="1.8" y="1.6" width="13.8" height="7.2" fill="#3d3bd3"/><rect x="2.8" y="12" width="12" height="1.7" fill="#9391ea"/></svg>
<span style="left:668.30px;top:286.79px;font-size:12px;letter-spacing:-0.158px;color:#222;">Portal</span>
<span style="left:803.60px;top:286.79px;font-size:12px;letter-spacing:-0.091px;color:#222;">Admin Admin</span>
<span style="left:938.70px;top:286.79px;font-size:12px;color:#222;">-</span>
<span style="left:1034.00px;top:286.79px;font-size:12px;letter-spacing:-0.068px;color:#222;">Task</span>
<span style="left:1366.20px;top:286.79px;font-size:12px;letter-spacing:-0.120px;color:#222;">4/4/2025 3:04:01 PM</span>
<div style="left:288.00px;top:313.00px;width:1445.00px;height:38.00px;background:#cfe3ee;border-top:1px solid #e1ecf3;"></div>
<div style="left:1360.00px;top:313.00px;width:136.00px;height:38.00px;background:#cbdfeb;border-top:1px solid #e1ecf3;"></div>
<div style="left:294.00px;top:326.90px;width:12.00px;height:11.80px;background:#fff;border:1px solid #7472e6;border-radius:3px;"></div>
<span style="left:333.80px;top:323.84px;font-size:12px;letter-spacing:0.055px;color:#222;">Incydent</span>
<span style="left:468.60px;top:323.84px;font-size:12px;letter-spacing:0.180px;color:#222;">Incident/322/2025/4/4</span>
<svg style="left:644.40px;top:323.90px;" width="13.40" height="13.40" viewBox="0 0 13.4 13.4"><path d="M11.4 10.6 A6 6 0 1 1 12.7 6.7" fill="none" stroke="#8f8de9" stroke-width="1.3"/><circle cx="6.3" cy="6.7" r="2" fill="none" stroke="#3d3bd3" stroke-width="1.5"/><path d="M8.6 4.4 V7.6 Q8.8 9 10.2 8.6" fill="none" stroke="#3d3bd3" stroke-width="1.4"/></svg>
<span style="left:664.80px;top:323.84px;font-size:12px;letter-spacing:-0.401px;color:#222;">Email</span>
<span style="left:803.60px;top:323.84px;font-size:12px;letter-spacing:-0.091px;color:#222;">Admin Admin</span>
<svg style="left:938.20px;top:321.90px;" width="84.00" height="21.60" viewBox="0 0 84 21.6"><path d="M4.8 0.6 H79.2 L83.4 10.8 L79.2 21.0 H4.8 L0.6 10.8 Z" fill="#2a8a78" stroke="#2a8a78" stroke-width="1.2" stroke-linejoin="round"/></svg>
<span style="left:968.50px;top:324.73px;font-size:11px;letter-spacing:0.261px;font-weight:700;color:#fff;">New</span>
<span style="left:1034.00px;top:323.84px;font-size:12px;letter-spacing:-0.084px;color:#222;">Printer failure</span>
<svg style="left:1231.00px;top:323.20px;" width="123.00" height="22.00" viewBox="0 0 123 22"><path d="M4.8 0.6 H118.2 L122.4 11.0 L118.2 21.4 H4.8 L0.6 11.0 Z" fill="#e8ebf0" stroke="#e8ebf0" stroke-width="1.2" stroke-linejoin="round"/></svg>
<svg style="left:1231.00px;top:323.20px;" width="20.00" height="22.00" viewBox="0 0 20 22"><path d="M4.8 0 H17.6 V22 H4.8 L0 11 Z" fill="#3f97e0"/></svg>
<div style="left:1235.00px;top:325.00px;width:41.00px;height:18.40px;background:linear-gradient(90deg,#3d3bd3,#463c9c);border-radius:4px;"></div>
<span style="left:1236.60px;top:326.22px;font-size:10.5px;letter-spacing:0.203px;font-weight:700;color:#fff;">3h 23m</span>
<span style="left:1366.20px;top:323.84px;font-size:12px;letter-spacing:-0.120px;color:#222;">4/4/2025 2:34:30 PM</span>
<div style="left:288.00px;top:351.00px;width:1445.00px;height:36.00px;background:#cfe3ee;border-top:1px solid #e1ecf3;"></div>
<div style="left:1360.00px;top:351.00px;width:136.00px;height:36.00px;background:#cbdfeb;border-top:1px solid #e1ecf3;"></div>
<div style="left:294.00px;top:364.00px;width:12.00px;height:11.80px;background:#fff;border:1px solid #7472e6;border-radius:3px;"></div>
<span style="left:333.80px;top:360.94px;font-size:12px;letter-spacing:-0.170px;color:#222;">Request</span>
<span style="left:468.60px;top:360.94px;font-size:12px;letter-spacing:0.175px;color:#222;">2025/40</span>
<svg style="left:644.00px;top:361.10px;" width="17.40" height="14.00" viewBox="0 0 17.4 14"><rect x="0" y="0" width="17.4" height="10.8" rx=".6" fill="#9391ea"/><rect x="1.8" y="1.6" width="13.8" height="7.2" fill="#3d3bd3"/><rect x="2.8" y="12" width="12" height="1.7" fill="#9391ea"/></svg>
<span style="left:668.30px;top:360.94px;font-size:12px;letter-spacing:-0.158px;color:#222;">Portal</span>
<span style="left:803.60px;top:360.94px;font-size:12px;letter-spacing:-0.091px;color:#222;">Admin Admin</span>
<span style="left:938.70px;top:360.94px;font-size:12px;color:#222;">-</span>
<span style="left:1034.00px;top:360.94px;font-size:12px;letter-spacing:0.009px;color:#222;">Updating permissions/access</span>
<span style="left:1366.20px;top:360.94px;font-size:12px;letter-spacing:-0.120px;color:#222;">4/4/2025 12:32:36 PM</span>
<div style="left:288.00px;top:387.00px;width:1445.00px;height:39.00px;background:#cfe3ee;border-top:1px solid #e1ecf3;"></div>
<div style="left:1360.00px;top:387.00px;width:136.00px;height:39.00px;background:#cbdfeb;border-top:1px solid #e1ecf3;"></div>
<div style="left:294.00px;top:401.10px;width:12.00px;height:11.80px;background:#fff;border:1px solid #7472e6;border-radius:3px;"></div>
<span style="left:333.80px;top:398.04px;font-size:12px;letter-spacing:0.055px;color:#222;">Incydent</span>
<span style="left:468.60px;top:398.04px;font-size:12px;letter-spacing:0.147px;color:#222;">Incident/321/2025/4/1</span>
<svg style="left:644.00px;top:398.20px;" width="17.40" height="14.00" viewBox="0 0 17.4 14"><rect x="0" y="0" width="17.4" height="10.8" rx=".6" fill="#9391ea"/><rect x="1.8" y="1.6" width="13.8" height="7.2" fill="#3d3bd3"/><rect x="2.8" y="12" width="12" height="1.7" fill="#9391ea"/></svg>
<span style="left:668.30px;top:398.04px;font-size:12px;letter-spacing:-0.158px;color:#222;">Portal</span>
<span style="left:803.60px;top:398.04px;font-size:12px;letter-spacing:-0.091px;color:#222;">Admin Admin</span>
<svg style="left:938.20px;top:396.10px;" width="84.00" height="21.60" viewBox="0 0 84 21.6"><path d="M4.8 0.6 H79.2 L83.4 10.8 L79.2 21.0 H4.8 L0.6 10.8 Z" fill="#e9e9ef" stroke="#e9e9ef" stroke-width="1.2" stroke-linejoin="round"/></svg>
<span style="left:956.80px;top:398.93px;font-size:11px;letter-spacing:-0.263px;font-weight:700;color:#2e2e2e;">Resolved</span>
<span style="left:1034.00px;top:398.04px;font-size:12px;letter-spacing:-0.042px;color:#222;">Monitor failure</span>
<svg style="left:1231.00px;top:397.00px;" width="123.00" height="23.00" viewBox="0 0 123 23"><defs><linearGradient id="rg3" x1="0" x2="1" y1="0" y2="0"><stop offset="0" stop-color="#cc2a30"/><stop offset=".55" stop-color="#a81a1e"/><stop offset="1" stop-color="#690a0a"/></linearGradient></defs><path d="M4.8 0.6 H118.2 L122.4 11.5 L118.2 22.4 H4.8 L0.6 11.5 Z" fill="url(#rg3)" stroke="url(#rg3)" stroke-width="1.2" stroke-linejoin="round"/></svg>
<svg style="left:1264.95px;top:403.30px;" width="8.40" height="10.60" viewBox="0 0 8.4 10.6"><path d="M0 0 L8.4 5.3 L0 10.6 Z" fill="#fff"/></svg>
<span style="left:1279.95px;top:400.92px;font-size:10.5px;letter-spacing:0.119px;font-weight:700;color:#fff;">20h 6m</span>
<span style="left:1366.20px;top:398.04px;font-size:12px;letter-spacing:-0.120px;color:#222;">4/1/2025 3:04:55 PM</span>
<span style="left:1502.00px;top:398.04px;font-size:12px;letter-spacing:-0.120px;color:#222;">4/3/2025 1:39:52 PM</span>
<div style="left:288.00px;top:426.00px;width:1445.00px;height:36.00px;background:#cfe3ee;border-top:1px solid #e1ecf3;"></div>
<div style="left:1360.00px;top:426.00px;width:136.00px;height:36.00px;background:#cbdfeb;border-top:1px solid #e1ecf3;"></div>
<div style="left:294.00px;top:438.10px;width:12.00px;height:11.80px;background:#fff;border:1px solid #7472e6;border-radius:3px;"></div>
<span style="left:333.80px;top:435.04px;font-size:12px;letter-spacing:0.055px;color:#222;">Incydent</span>
<span style="left:468.60px;top:435.04px;font-size:12px;letter-spacing:0.098px;color:#222;">Incident/319/2025/3/...</span>
<svg style="left:644.00px;top:435.20px;" width="17.40" height="14.00" viewBox="0 0 17.4 14"><rect x="0" y="0" width="17.4" height="10.8" rx=".6" fill="#9391ea"/><rect x="1.8" y="1.6" width="13.8" height="7.2" fill="#3d3bd3"/><rect x="2.8" y="12" width="12" height="1.7" fill="#9391ea"/></svg>
<span style="left:668.30px;top:435.04px;font-size:12px;letter-spacing:-0.158px;color:#222;">Portal</span>
<span style="left:803.60px;top:435.04px;font-size:12px;letter-spacing:-0.091px;color:#222;">Admin Admin</span>
<svg style="left:938.20px;top:433.10px;" width="84.00" height="21.60" viewBox="0 0 84 21.6"><path d="M4.8 0.6 H79.2 L83.4 10.8 L79.2 21.0 H4.8 L0.6 10.8 Z" fill="#2a8a78" stroke="#2a8a78" stroke-width="1.2" stroke-linejoin="round"/></svg>
<span style="left:968.50px;top:435.93px;font-size:11px;letter-spacing:0.261px;font-weight:700;color:#fff;">New</span>
<span style="left:1034.00px;top:435.04px;font-size:12px;letter-spacing:-0.044px;color:#222;">Anonymous ticket</span>
<span style="left:1366.20px;top:435.04px;font-size:12px;letter-spacing:-0.120px;color:#222;">3/31/2025 12:35:48 PM</span>
<div style="left:288.00px;top:462.00px;width:1445.00px;height:38.00px;background:#cfe3ee;border-top:1px solid #e1ecf3;"></div>
<div style="left:1360.00px;top:462.00px;width:136.00px;height:38.00px;background:#cbdfeb;border-top:1px solid #e1ecf3;"></div>
<div style="left:294.00px;top:475.20px;width:12.00px;height:11.80px;background:#fff;border:1px solid #7472e6;border-radius:3px;"></div>
<span style="left:333.80px;top:472.14px;font-size:12px;letter-spacing:-0.093px;color:#222;">Reservation</span>
<span style="left:468.60px;top:472.14px;font-size:12px;letter-spacing:0.025px;color:#222;">R/2025/21</span>
<svg style="left:644.00px;top:472.30px;" width="17.40" height="14.00" viewBox="0 0 17.4 14"><rect x="0" y="0" width="17.4" height="10.8" rx=".6" fill="#9391ea"/><rect x="1.8" y="1.6" width="13.8" height="7.2" fill="#3d3bd3"/><rect x="2.8" y="12" width="12" height="1.7" fill="#9391ea"/></svg>
<span style="left:668.30px;top:472.14px;font-size:12px;letter-spacing:-0.158px;color:#222;">Portal</span>
<span style="left:803.60px;top:472.14px;font-size:12px;letter-spacing:-0.091px;color:#222;">Admin Admin</span>
<span style="left:938.70px;top:472.14px;font-size:12px;color:#222;">-</span>
<span style="left:1034.00px;top:472.14px;font-size:12px;letter-spacing:-0.069px;color:#222;">Rezerwacja</span>
<svg style="left:1231.00px;top:471.10px;" width="123.00" height="23.00" viewBox="0 0 123 23"><defs><linearGradient id="rg5" x1="0" x2="1" y1="0" y2="0"><stop offset="0" stop-color="#cc2a30"/><stop offset=".55" stop-color="#a81a1e"/><stop offset="1" stop-color="#690a0a"/></linearGradient></defs><path d="M4.8 0.6 H118.2 L122.4 11.5 L118.2 22.4 H4.8 L0.6 11.5 Z" fill="url(#rg5)" stroke="url(#rg5)" stroke-width="1.2" stroke-linejoin="round"/></svg>
<svg style="left:1255.15px;top:477.40px;" width="8.40" height="10.60" viewBox="0 0 8.4 10.6"><path d="M0 0 L8.4 5.3 L0 10.6 Z" fill="#fff"/></svg>
<span style="left:1270.15px;top:475.02px;font-size:10.5px;letter-spacing:-0.069px;font-weight:700;color:#fff;">14d 5h 59m</span>
<span style="left:1366.20px;top:472.14px;font-size:12px;letter-spacing:-0.030px;color:#222;">3/20/2025 9:11:56 AM</span>
<div style="left:288.00px;top:500.00px;width:1445.00px;height:36.00px;background:#cfe3ee;border-top:1px solid #e1ecf3;"></div>
<div style="left:1360.00px;top:500.00px;width:136.00px;height:36.00px;background:#cbdfeb;border-top:1px solid #e1ecf3;"></div>
<div style="left:294.00px;top:512.20px;width:12.00px;height:11.80px;background:#fff;border:1px solid #7472e6;border-radius:3px;"></div>
<span style="left:333.80px;top:509.14px;font-size:12px;letter-spacing:0.055px;color:#222;">Incydent</span>
<span style="left:468.60px;top:509.14px;font-size:12px;letter-spacing:0.180px;color:#222;">Incident/206/2025/3/6</span>
<svg style="left:644.00px;top:509.30px;" width="17.40" height="14.00" viewBox="0 0 17.4 14"><rect x="0" y="0" width="17.4" height="10.8" rx=".6" fill="#9391ea"/><rect x="1.8" y="1.6" width="13.8" height="7.2" fill="#3d3bd3"/><rect x="2.8" y="12" width="12" height="1.7" fill="#9391ea"/></svg>
<span style="left:668.30px;top:509.14px;font-size:12px;letter-spacing:-0.158px;color:#222;">Portal</span>
<span style="left:803.60px;top:509.14px;font-size:12px;letter-spacing:-0.091px;color:#222;">Admin Admin</span>
<svg style="left:938.20px;top:507.20px;" width="84.00" height="21.60" viewBox="0 0 84 21.6"><path d="M4.8 0.6 H79.2 L83.4 10.8 L79.2 21.0 H4.8 L0.6 10.8 Z" fill="#2a8a78" stroke="#2a8a78" stroke-width="1.2" stroke-linejoin="round"/></svg>
<span style="left:968.50px;top:510.03px;font-size:11px;letter-spacing:0.261px;font-weight:700;color:#fff;">New</span>
<span style="left:1034.00px;top:509.14px;font-size:12px;letter-spacing:-0.044px;color:#222;">Anonymous ticket</span>
<span style="left:1366.20px;top:509.14px;font-size:12px;letter-spacing:-0.030px;color:#222;">3/6/2025 11:52:52 AM</span>
<div style="left:288.00px;top:536.00px;width:1445.00px;height:36.00px;background:#f8f8fb;border-top:1px solid #eeeef3;"></div>
<div style="left:1360.00px;top:536.00px;width:136.00px;height:36.00px;background:#f4f4f7;border-top:1px solid #eeeef3;"></div>
<div style="left:294.00px;top:549.30px;width:12.00px;height:11.80px;background:#fff;border:1px solid #7472e6;border-radius:3px;"></div>
<span style="left:333.80px;top:546.24px;font-size:12px;letter-spacing:0.055px;color:#222;">Incydent</span>
<span style="left:468.60px;top:546.24px;font-size:12px;letter-spacing:0.180px;color:#222;">Incident/205/2025/3/6</span>
<svg style="left:644.00px;top:546.40px;" width="17.40" height="14.00" viewBox="0 0 17.4 14"><rect x="0" y="0" width="17.4" height="10.8" rx=".6" fill="#9391ea"/><rect x="1.8" y="1.6" width="13.8" height="7.2" fill="#3d3bd3"/><rect x="2.8" y="12" width="12" height="1.7" fill="#9391ea"/></svg>
<span style="left:668.30px;top:546.24px;font-size:12px;letter-spacing:-0.158px;color:#222;">Portal</span>
<span style="left:803.60px;top:546.24px;font-size:12px;letter-spacing:-0.091px;color:#222;">Admin Admin</span>
<svg style="left:938.20px;top:544.30px;" width="84.00" height="21.60" viewBox="0 0 84 21.6"><path d="M4.8 0.6 H79.2 L83.4 10.8 L79.2 21.0 H4.8 L0.6 10.8 Z" fill="#bdd0c0" stroke="#bdd0c0" stroke-width="1.2" stroke-linejoin="round"/></svg>
<span style="left:962.40px;top:547.13px;font-size:11px;letter-spacing:-0.179px;font-weight:700;color:#2e3a30;">Closed</span>
<span style="left:1034.00px;top:546.24px;font-size:12px;letter-spacing:-0.044px;color:#222;">Anonymous ticket</span>
<span style="left:1366.20px;top:546.24px;font-size:12px;letter-spacing:-0.030px;color:#222;">3/6/2025 11:51:59 AM</span>
<span style="left:1502.00px;top:546.24px;font-size:12px;letter-spacing:-0.120px;color:#222;">4/2/2025 3:44:48 PM</span>
<div style="left:288.00px;top:572.00px;width:1445.00px;height:36.00px;background:#cfe3ee;border-top:1px solid #e1ecf3;"></div>
<div style="left:1360.00px;top:572.00px;width:136.00px;height:36.00px;background:#cbdfeb;border-top:1px solid #e1ecf3;"></div>
<div style="left:294.00px;top:585.20px;width:12.00px;height:11.80px;background:#fff;border:1px solid #7472e6;border-radius:3px;"></div>
<span style="left:333.80px;top:582.14px;font-size:12px;letter-spacing:-0.170px;color:#222;">Request</span>
<span style="left:468.60px;top:582.14px;font-size:12px;letter-spacing:0.175px;color:#222;">2025/33</span>
<svg style="left:644.00px;top:582.30px;" width="17.40" height="14.00" viewBox="0 0 17.4 14"><rect x="0" y="0" width="17.4" height="10.8" rx=".6" fill="#9391ea"/><rect x="1.8" y="1.6" width="13.8" height="7.2" fill="#3d3bd3"/><rect x="2.8" y="12" width="12" height="1.7" fill="#9391ea"/></svg>
<span style="left:668.30px;top:582.14px;font-size:12px;letter-spacing:-0.158px;color:#222;">Portal</span>
<span style="left:803.60px;top:582.14px;font-size:12px;letter-spacing:-0.091px;color:#222;">Admin Admin</span>
<span style="left:938.70px;top:582.14px;font-size:12px;color:#222;">-</span>
<span style="left:1034.00px;top:582.14px;font-size:12px;letter-spacing:-0.192px;color:#222;">Email Software</span>
<span style="left:1366.20px;top:582.14px;font-size:12px;letter-spacing:-0.030px;color:#222;">3/6/2025 9:13:20 AM</span>
<div style="left:288.00px;top:608.00px;width:1445.00px;height:36.00px;background:#f8f8fb;border-top:1px solid #eeeef3;"></div>
<div style="left:1360.00px;top:608.00px;width:136.00px;height:36.00px;background:#f4f4f7;border-top:1px solid #eeeef3;"></div>
<div style="left:294.00px;top:621.30px;width:12.00px;height:11.80px;background:#fff;border:1px solid #7472e6;border-radius:3px;"></div>
<span style="left:333.80px;top:618.24px;font-size:12px;letter-spacing:0.055px;color:#222;">Incydent</span>
<span style="left:468.60px;top:618.24px;font-size:12px;letter-spacing:0.180px;color:#222;">Incident/193/2025/3/3</span>
<svg style="left:603.10px;top:617.70px;" width="13.00" height="14.20" viewBox="0 0 13 14.2"><g fill="#d9364a"><circle cx="6.5" cy="3.7" r="3.7"/><path d="M0.1 14.2 Q0.1 9 4.4 8.4 L6.5 10.2 L8.6 8.4 Q12.9 9 12.9 14.2 Z"/></g><path d="M5.9 9.6 H7.1 L7.5 13.6 H5.5 Z" fill="#fff" opacity=".85"/></svg>
<svg style="left:644.00px;top:618.40px;" width="17.40" height="14.00" viewBox="0 0 17.4 14"><rect x="0" y="0" width="17.4" height="10.8" rx=".6" fill="#9391ea"/><rect x="1.8" y="1.6" width="13.8" height="7.2" fill="#3d3bd3"/><rect x="2.8" y="12" width="12" height="1.7" fill="#9391ea"/></svg>
<span style="left:668.30px;top:618.24px;font-size:12px;letter-spacing:-0.158px;color:#222;">Portal</span>
<span style="left:803.60px;top:618.24px;font-size:12px;letter-spacing:-0.091px;color:#222;">Admin Admin</span>
<svg style="left:938.20px;top:616.30px;" width="84.00" height="21.60" viewBox="0 0 84 21.6"><path d="M4.8 0.6 H79.2 L83.4 10.8 L79.2 21.0 H4.8 L0.6 10.8 Z" fill="#bdd0c0" stroke="#bdd0c0" stroke-width="1.2" stroke-linejoin="round"/></svg>
<span style="left:962.40px;top:619.13px;font-size:11px;letter-spacing:-0.179px;font-weight:700;color:#2e3a30;">Closed</span>
<span style="left:1034.00px;top:618.24px;font-size:12px;letter-spacing:-0.044px;color:#222;">Anonymous ticket</span>
<span style="left:1366.20px;top:618.24px;font-size:12px;letter-spacing:-0.030px;color:#222;">3/3/2025 9:02:12 AM</span>
<span style="left:1502.00px;top:618.24px;font-size:12px;letter-spacing:-0.120px;color:#222;">4/2/2025 3:46:06 PM</span>
<div style="left:288.00px;top:644.00px;width:1445.00px;height:38.00px;background:#cfe3ee;border-top:1px solid #e1ecf3;"></div>
<div style="left:1360.00px;top:644.00px;width:136.00px;height:38.00px;background:#cbdfeb;border-top:1px solid #e1ecf3;"></div>
<div style="left:294.00px;top:658.00px;width:12.00px;height:11.80px;background:#fff;border:1px solid #7472e6;border-radius:3px;"></div>
<span style="left:333.80px;top:654.94px;font-size:12px;letter-spacing:0.055px;color:#222;">Incydent</span>
<span style="left:468.60px;top:654.94px;font-size:12px;letter-spacing:0.098px;color:#222;">Incident/192/2025/2/...</span>
<svg style="left:603.10px;top:654.40px;" width="13.00" height="14.20" viewBox="0 0 13 14.2"><g fill="#d9364a"><circle cx="6.5" cy="3.7" r="3.7"/><path d="M0.1 14.2 Q0.1 9 4.4 8.4 L6.5 10.2 L8.6 8.4 Q12.9 9 12.9 14.2 Z"/></g><path d="M5.9 9.6 H7.1 L7.5 13.6 H5.5 Z" fill="#fff" opacity=".85"/></svg>
<svg style="left:644.00px;top:655.10px;" width="17.40" height="14.00" viewBox="0 0 17.4 14"><rect x="0" y="0" width="17.4" height="10.8" rx=".6" fill="#9391ea"/><rect x="1.8" y="1.6" width="13.8" height="7.2" fill="#3d3bd3"/><rect x="2.8" y="12" width="12" height="1.7" fill="#9391ea"/></svg>
<span style="left:668.30px;top:654.94px;font-size:12px;letter-spacing:-0.158px;color:#222;">Portal</span>
<span style="left:803.60px;top:654.94px;font-size:12px;letter-spacing:-0.091px;color:#222;">Admin Admin</span>
<svg style="left:938.20px;top:653.00px;" width="84.00" height="21.60" viewBox="0 0 84 21.6"><path d="M4.8 0.6 H79.2 L83.4 10.8 L79.2 21.0 H4.8 L0.6 10.8 Z" fill="#2a8a78" stroke="#2a8a78" stroke-width="1.2" stroke-linejoin="round"/></svg>
<span style="left:968.50px;top:655.83px;font-size:11px;letter-spacing:0.261px;font-weight:700;color:#fff;">New</span>
<span style="left:1034.00px;top:654.94px;font-size:12px;letter-spacing:-0.044px;color:#222;">Anonymous ticket</span>
<svg style="left:1231.00px;top:653.90px;" width="123.00" height="23.00" viewBox="0 0 123 23"><defs><linearGradient id="rg10" x1="0" x2="1" y1="0" y2="0"><stop offset="0" stop-color="#cc2a30"/><stop offset=".55" stop-color="#a81a1e"/><stop offset="1" stop-color="#690a0a"/></linearGradient></defs><path d="M4.8 0.6 H118.2 L122.4 11.5 L118.2 22.4 H4.8 L0.6 11.5 Z" fill="url(#rg10)" stroke="url(#rg10)" stroke-width="1.2" stroke-linejoin="round"/></svg>
<svg style="left:1257.90px;top:660.20px;" width="8.40" height="10.60" viewBox="0 0 8.4 10.6"><path d="M0 0 L8.4 5.3 L0 10.6 Z" fill="#fff"/></svg>
<span style="left:1272.90px;top:657.82px;font-size:10.5px;letter-spacing:-0.039px;font-weight:700;color:#fff;">8d 3h 36m</span>
<span style="left:1366.20px;top:654.94px;font-size:12px;letter-spacing:-0.120px;color:#222;">2/28/2025 3:34:21 PM</span>
<div style="left:288.00px;top:682.00px;width:1445.00px;height:36.00px;background:#cfe3ee;border-top:1px solid #e1ecf3;"></div>
<div style="left:1360.00px;top:682.00px;width:136.00px;height:36.00px;background:#cbdfeb;border-top:1px solid #e1ecf3;"></div>
<div style="left:294.00px;top:695.10px;width:12.00px;height:11.80px;background:#fff;border:1px solid #7472e6;border-radius:3px;"></div>
<span style="left:333.80px;top:692.04px;font-size:12px;letter-spacing:0.055px;color:#222;">Incydent</span>
<span style="left:468.60px;top:692.04px;font-size:12px;letter-spacing:0.098px;color:#222;">Incident/108/2025/2/...</span>
<svg style="left:644.00px;top:692.20px;" width="17.40" height="14.00" viewBox="0 0 17.4 14"><rect x="0" y="0" width="17.4" height="10.8" rx=".6" fill="#9391ea"/><rect x="1.8" y="1.6" width="13.8" height="7.2" fill="#3d3bd3"/><rect x="2.8" y="12" width="12" height="1.7" fill="#9391ea"/></svg>
<span style="left:668.30px;top:692.04px;font-size:12px;letter-spacing:-0.158px;color:#222;">Portal</span>
<span style="left:803.60px;top:692.04px;font-size:12px;letter-spacing:-0.091px;color:#222;">Admin Admin</span>
<svg style="left:938.20px;top:690.10px;" width="84.00" height="21.60" viewBox="0 0 84 21.6"><path d="M4.8 0.6 H79.2 L83.4 10.8 L79.2 21.0 H4.8 L0.6 10.8 Z" fill="#2a8a78" stroke="#2a8a78" stroke-width="1.2" stroke-linejoin="round"/></svg>
<span style="left:968.50px;top:692.93px;font-size:11px;letter-spacing:0.261px;font-weight:700;color:#fff;">New</span>
<span style="left:1034.00px;top:692.04px;font-size:12px;letter-spacing:-0.040px;color:#222;">CustomowaKategoria</span>
<span style="left:1366.20px;top:692.04px;font-size:12px;letter-spacing:-0.120px;color:#222;">2/25/2025 1:26:57 PM</span>
<div style="left:288.00px;top:718.00px;width:1445.00px;height:36.00px;background:#cfe3ee;border-top:1px solid #e1ecf3;"></div>
<div style="left:1360.00px;top:718.00px;width:136.00px;height:36.00px;background:#cbdfeb;border-top:1px solid #e1ecf3;"></div>
<div style="left:294.00px;top:730.95px;width:12.00px;height:11.80px;background:#fff;border:1px solid #7472e6;border-radius:3px;"></div>
<span style="left:333.80px;top:727.89px;font-size:12px;letter-spacing:0.055px;color:#222;">Incydent</span>
<span style="left:468.60px;top:727.89px;font-size:12px;letter-spacing:0.098px;color:#222;">Incident/107/2025/2/...</span>
<svg style="left:644.00px;top:728.05px;" width="17.40" height="14.00" viewBox="0 0 17.4 14"><rect x="0" y="0" width="17.4" height="10.8" rx=".6" fill="#9391ea"/><rect x="1.8" y="1.6" width="13.8" height="7.2" fill="#3d3bd3"/><rect x="2.8" y="12" width="12" height="1.7" fill="#9391ea"/></svg>
<span style="left:668.30px;top:727.89px;font-size:12px;letter-spacing:-0.158px;color:#222;">Portal</span>
<span style="left:803.60px;top:727.89px;font-size:12px;letter-spacing:-0.091px;color:#222;">Admin Admin</span>
<svg style="left:938.20px;top:725.95px;" width="84.00" height="21.60" viewBox="0 0 84 21.6"><path d="M4.8 0.6 H79.2 L83.4 10.8 L79.2 21.0 H4.8 L0.6 10.8 Z" fill="#2a8a78" stroke="#2a8a78" stroke-width="1.2" stroke-linejoin="round"/></svg>
<span style="left:968.50px;top:728.78px;font-size:11px;letter-spacing:0.261px;font-weight:700;color:#fff;">New</span>
<span style="left:1034.00px;top:727.89px;font-size:12px;letter-spacing:-0.040px;color:#222;">CustomowaKategoria</span>
<span style="left:1366.20px;top:727.89px;font-size:12px;letter-spacing:-0.120px;color:#222;">2/25/2025 1:26:30 PM</span>
<div style="left:288.00px;top:754.00px;width:1445.00px;height:36.00px;background:#cfe3ee;border-top:1px solid #e1ecf3;"></div>
<div style="left:1360.00px;top:754.00px;width:136.00px;height:36.00px;background:#cbdfeb;border-top:1px solid #e1ecf3;"></div>
<div style="left:294.00px;top:767.05px;width:12.00px;height:11.80px;background:#fff;border:1px solid #7472e6;border-radius:3px;"></div>
<span style="left:333.80px;top:763.99px;font-size:12px;letter-spacing:0.055px;color:#222;">Incydent</span>
<span style="left:468.60px;top:763.99px;font-size:12px;letter-spacing:0.098px;color:#222;">Incident/106/2025/2/...</span>
<svg style="left:644.00px;top:764.15px;" width="17.40" height="14.00" viewBox="0 0 17.4 14"><rect x="0" y="0" width="17.4" height="10.8" rx=".6" fill="#9391ea"/><rect x="1.8" y="1.6" width="13.8" height="7.2" fill="#3d3bd3"/><rect x="2.8" y="12" width="12" height="1.7" fill="#9391ea"/></svg>
<span style="left:668.30px;top:763.99px;font-size:12px;letter-spacing:-0.158px;color:#222;">Portal</span>
<span style="left:803.60px;top:763.99px;font-size:12px;letter-spacing:-0.091px;color:#222;">Admin Admin</span>
<svg style="left:938.20px;top:762.05px;" width="84.00" height="21.60" viewBox="0 0 84 21.6"><path d="M4.8 0.6 H79.2 L83.4 10.8 L79.2 21.0 H4.8 L0.6 10.8 Z" fill="#2a8a78" stroke="#2a8a78" stroke-width="1.2" stroke-linejoin="round"/></svg>
<span style="left:968.50px;top:764.88px;font-size:11px;letter-spacing:0.261px;font-weight:700;color:#fff;">New</span>
<span style="left:1034.00px;top:763.99px;font-size:12px;letter-spacing:-0.040px;color:#222;">CustomowaKategoria</span>
<span style="left:1366.20px;top:763.99px;font-size:12px;letter-spacing:-0.120px;color:#222;">2/25/2025 1:25:55 PM</span>
<div style="left:288.00px;top:790.00px;width:1445.00px;height:36.00px;background:#cfe3ee;border-top:1px solid #e1ecf3;"></div>
<div style="left:1360.00px;top:790.00px;width:136.00px;height:36.00px;background:#cbdfeb;border-top:1px solid #e1ecf3;"></div>
<div style="left:294.00px;top:802.95px;width:12.00px;height:11.80px;background:#fff;border:1px solid #7472e6;border-radius:3px;"></div>
<span style="left:333.80px;top:799.89px;font-size:12px;letter-spacing:0.055px;color:#222;">Incydent</span>
<span style="left:468.60px;top:799.89px;font-size:12px;letter-spacing:0.098px;color:#222;">Incident/105/2025/2/...</span>
<svg style="left:644.00px;top:800.05px;" width="17.40" height="14.00" viewBox="0 0 17.4 14"><rect x="0" y="0" width="17.4" height="10.8" rx=".6" fill="#9391ea"/><rect x="1.8" y="1.6" width="13.8" height="7.2" fill="#3d3bd3"/><rect x="2.8" y="12" width="12" height="1.7" fill="#9391ea"/></svg>
<span style="left:668.30px;top:799.89px;font-size:12px;letter-spacing:-0.158px;color:#222;">Portal</span>
<span style="left:803.60px;top:799.89px;font-size:12px;letter-spacing:-0.091px;color:#222;">Admin Admin</span>
<svg style="left:938.20px;top:797.95px;" width="84.00" height="21.60" viewBox="0 0 84 21.6"><path d="M4.8 0.6 H79.2 L83.4 10.8 L79.2 21.0 H4.8 L0.6 10.8 Z" fill="#2a8a78" stroke="#2a8a78" stroke-width="1.2" stroke-linejoin="round"/></svg>
<span style="left:968.50px;top:800.78px;font-size:11px;letter-spacing:0.261px;font-weight:700;color:#fff;">New</span>
<span style="left:1034.00px;top:799.89px;font-size:12px;letter-spacing:-0.040px;color:#222;">CustomowaKategoria</span>
<span style="left:1366.20px;top:799.89px;font-size:12px;letter-spacing:-0.120px;color:#222;">2/25/2025 1:25:34 PM</span>
<div style="left:288.00px;top:826.00px;width:1445.00px;height:36.00px;background:#cfe3ee;border-top:1px solid #e1ecf3;"></div>
<div style="left:1360.00px;top:826.00px;width:136.00px;height:36.00px;background:#cbdfeb;border-top:1px solid #e1ecf3;"></div>
<div style="left:294.00px;top:838.85px;width:12.00px;height:11.80px;background:#fff;border:1px solid #7472e6;border-radius:3px;"></div>
<span style="left:333.80px;top:835.79px;font-size:12px;letter-spacing:0.055px;color:#222;">Incydent</span>
<span style="left:468.60px;top:835.79px;font-size:12px;letter-spacing:0.098px;color:#222;">Incident/104/2025/2/...</span>
<svg style="left:644.00px;top:835.95px;" width="17.40" height="14.00" viewBox="0 0 17.4 14"><rect x="0" y="0" width="17.4" height="10.8" rx=".6" fill="#9391ea"/><rect x="1.8" y="1.6" width="13.8" height="7.2" fill="#3d3bd3"/><rect x="2.8" y="12" width="12" height="1.7" fill="#9391ea"/></svg>
<span style="left:668.30px;top:835.79px;font-size:12px;letter-spacing:-0.158px;color:#222;">Portal</span>
<span style="left:803.60px;top:835.79px;font-size:12px;letter-spacing:-0.091px;color:#222;">Admin Admin</span>
<svg style="left:938.20px;top:833.85px;" width="84.00" height="21.60" viewBox="0 0 84 21.6"><path d="M4.8 0.6 H79.2 L83.4 10.8 L79.2 21.0 H4.8 L0.6 10.8 Z" fill="#2a8a78" stroke="#2a8a78" stroke-width="1.2" stroke-linejoin="round"/></svg>
<span style="left:968.50px;top:836.68px;font-size:11px;letter-spacing:0.261px;font-weight:700;color:#fff;">New</span>
<span style="left:1034.00px;top:835.79px;font-size:12px;letter-spacing:-0.040px;color:#222;">CustomowaKategoria</span>
<span style="left:1366.20px;top:835.79px;font-size:12px;letter-spacing:-0.120px;color:#222;">2/25/2025 1:15:07 PM</span>
<div style="left:1891.00px;top:277.00px;width:10.00px;height:571.00px;background:#e6e9fb;"></div>
<svg style="left:1892.80px;top:281.00px;" width="6.60" height="3.60" viewBox="0 0 6.6 3.6"><path d="M0 3.6 L3.3 0 L6.6 3.6 Z" fill="#c3c5cf"/></svg>
<svg style="left:1892.80px;top:840.40px;" width="6.60" height="3.60" viewBox="0 0 6.6 3.6"><path d="M0 0 L3.3 3.6 L6.6 0 Z" fill="#c3c5cf"/></svg>
<div style="left:1893.00px;top:289.80px;width:6.00px;height:224.80px;background:#b9bccb;border-radius:3px;"></div>
<div style="left:288.00px;top:847.40px;width:1613.00px;height:40.00px;background:#f8f9fb;border-top:1px solid #dfe1e8;border-radius:0 0 4px 4px;"></div>
<svg style="left:303.20px;top:864.00px;" width="8.00" height="8.00" viewBox="0 0 8 8"><rect x="0" y="0" width="1.4" height="8" fill="#666"/><path d="M8 0 V8 L2.2 4 Z" fill="#666"/></svg>
<svg style="left:333.20px;top:864.00px;" width="6.00" height="8.00" viewBox="0 0 6 8"><path d="M6 0 V8 L0 4 Z" fill="#666"/></svg>
<div style="left:350.00px;top:854.00px;width:28.00px;height:28.00px;background:#cfcff0;"></div>
<span style="left:361.40px;top:859.14px;font-size:12px;color:#3d3bd3;">1</span>
<svg style="left:389.00px;top:864.00px;" width="6.00" height="8.00" viewBox="0 0 6 8"><path d="M0 0 V8 L6 4 Z" fill="#666"/></svg>
<svg style="left:415.80px;top:864.00px;" width="8.00" height="8.00" viewBox="0 0 8 8"><rect x="6.6" y="0" width="1.4" height="8" fill="#666"/><path d="M0 0 V8 L5.8 4 Z" fill="#666"/></svg>
<span style="left:445.40px;top:858.94px;font-size:12px;letter-spacing:-0.256px;color:#333;">Page</span>
<div style="left:479.00px;top:854.00px;width:58.00px;height:28.00px;background:#f8f9fc;border:1px solid #e6e8fc;border-radius:4px;"></div>
<span style="left:489.40px;top:859.14px;font-size:12px;color:#333;">1</span>
<span style="left:543.70px;top:858.94px;font-size:12px;letter-spacing:-0.503px;color:#333;">of 1</span>
<div style="left:574.00px;top:854.00px;width:70.00px;height:28.00px;background:#f8f9fc;border:1px solid #e6e8fc;border-radius:4px;"></div>
<div style="left:619.00px;top:854.00px;width:25.00px;height:28.00px;background:#eceffe;border-radius:0 4px 4px 0;"></div>
<span style="left:584.40px;top:859.14px;font-size:12px;letter-spacing:-0.006px;color:#333;">100</span>
<svg style="left:627.40px;top:865.40px;" width="7.60" height="5.00" viewBox="0 0 7.6 5"><path d="M0 0 H7.6 L3.8 5 Z" fill="#3d3bd3"/></svg>
<span style="left:650.20px;top:858.94px;font-size:12px;letter-spacing:-0.076px;color:#333;">items per page</span>
<span style="left:1770.20px;top:858.94px;font-size:12px;letter-spacing:-0.250px;color:#333;">1 - 38 of 38 items</span>
<svg style="left:1875.60px;top:861.00px;" width="13.40" height="14.40" viewBox="0 0 13.4 14.4"><path d="M6.2 2.6 A5.4 5.4 0 1 0 11.9 6.6" fill="none" stroke="#222" stroke-width="1.5"/><path d="M5.4 0 L9.8 2.8 L5.4 5.6 Z" fill="#222"/></svg>
<div style="left:1777.40px;top:185.00px;width:115.40px;height:21.60px;background:#fff;box-shadow:0 0 0 2px #e3e7e3,0 1px 5px rgba(110,125,110,.4);"></div>
<svg style="left:1790.60px;top:191.60px;" width="9.40" height="9.40" viewBox="0 0 10 10"><path d="M5 0.4V9.6M0.4 5H9.6" stroke="#222" stroke-width="1.5"/></svg>
<span style="left:1809.00px;top:188.14px;font-size:12.5px;letter-spacing:-0.465px;color:#222;">Add view</span>
<div style="left:1867.80px;top:154.80px;width:25.80px;height:33.00px;background:#fff;border:3.5px solid #8fd640;border-radius:6.5px;box-shadow:0 0 3px rgba(120,150,90,.45);"></div>
<svg style="left:1878.00px;top:164.00px;" width="4.40" height="11.60" viewBox="0 0 4.4 11.6"><g fill="#222"><rect x="1" y="0" width="2.4" height="2.4"/><rect x="1" y="4.6" width="2.4" height="2.4"/><rect x="1" y="9.2" width="2.4" height="2.4"/></g></svg>
<svg style="left:0.00px;top:0.00px;pointer-events:none;" width="1920.00" height="911.00" viewBox="0 0 1920 911"><path d="M1795.8 206.9 L1771.1 222.3 L1776.9 223.2 L1736.5 296 L1787.9 230.2 L1791.1 235.5 Z" fill="#8fd640" style="filter:drop-shadow(1.5px 2px 2px rgba(0,0,0,.35))"/></svg>
</body></html>
